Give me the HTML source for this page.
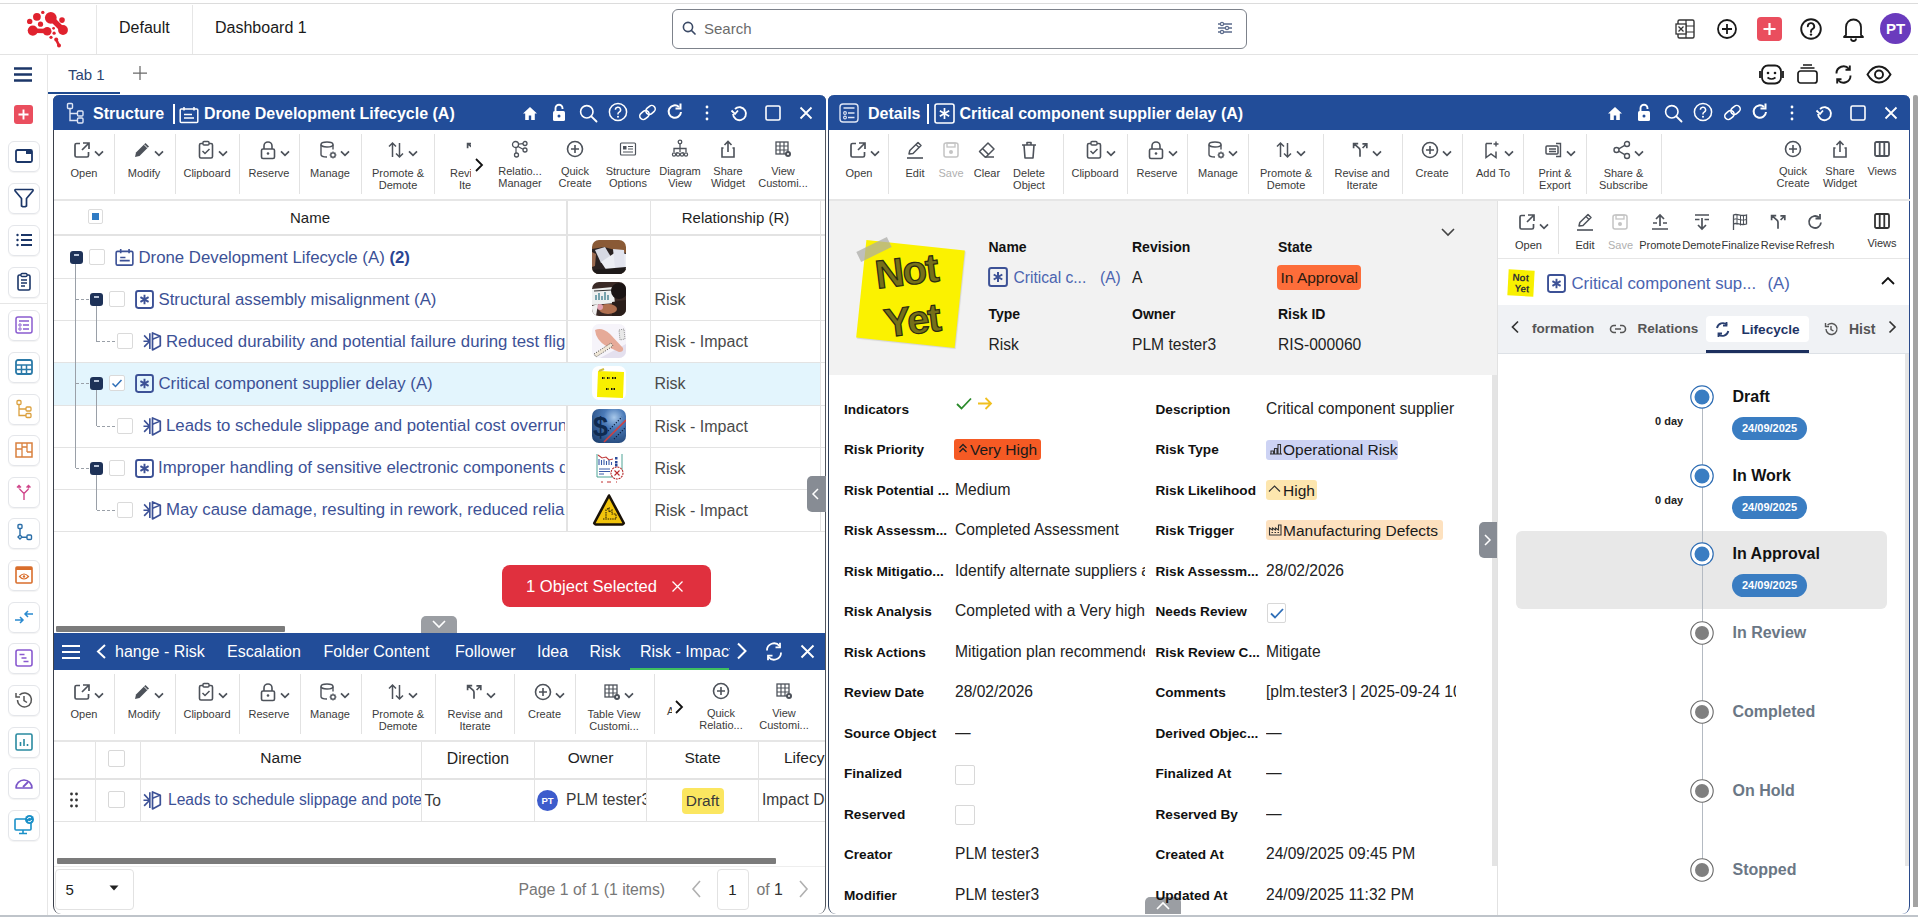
<!DOCTYPE html>
<html><head><meta charset="utf-8"><title>Dashboard</title>
<style>
html,body{margin:0;padding:0;background:#fff;}
body{width:1918px;height:917px;position:relative;overflow:hidden;font-family:"Liberation Sans",sans-serif;}
.t{position:absolute;white-space:nowrap;}
.r{position:absolute;}
</style></head><body>

<div class="r" style="left:0px;top:3px;width:1918px;height:1px;background:#dcdcdc"></div>
<div class="r" style="left:0px;top:54px;width:1918px;height:1px;background:#e3e3e3"></div>
<svg class="r" style="left:0px;top:0px;" width="80" height="54" viewBox="0 0 80 54" fill="none"><circle cx="50.8" cy="17.8" r="5.9" fill="#e0222e"/><circle cx="63" cy="30" r="4.9" fill="#e0222e"/><circle cx="32.8" cy="30.6" r="5.1" fill="#e0222e"/><circle cx="47.2" cy="31.2" r="4.3" fill="#e0222e"/><circle cx="36.9" cy="16.8" r="3.9" fill="#e0222e"/><circle cx="29.7" cy="21.4" r="2.7" fill="#e0222e"/><circle cx="40.5" cy="24.2" r="2.6" fill="#e0222e"/><circle cx="42.8" cy="12.4" r="1.7" fill="#e0222e"/><circle cx="62" cy="20.1" r="2.8" fill="#e0222e"/><circle cx="53.6" cy="28.3" r="1.4" fill="#e0222e"/><circle cx="54.1" cy="33.2" r="1.6" fill="#e0222e"/><circle cx="51" cy="37.3" r="1.6" fill="#e0222e"/><circle cx="56.2" cy="39.6" r="2.0" fill="#e0222e"/><circle cx="59" cy="45.5" r="2.0" fill="#e0222e"/><path d="M52 19 L62 29" stroke="#e0222e" stroke-width="5.5" stroke-linecap="round"/><path d="M33 30.8 L47 31" stroke="#e0222e" stroke-width="4.5"/><path d="M56.2 39.6 L59 45.5" stroke="#e0222e" stroke-width="2.6"/></svg>
<div class="r" style="left:96px;top:5px;width:1px;height:49px;background:#e6e6e6"></div>
<div class="r" style="left:192px;top:5px;width:1px;height:49px;background:#e6e6e6"></div>
<div class="t " style="left:119px;top:17.0px;font-size:16px;line-height:22px;color:#1a1a1a;font-weight:400;">Default</div>
<div class="t " style="left:215px;top:17.0px;font-size:16px;line-height:22px;color:#1a1a1a;font-weight:400;">Dashboard 1</div>
<div class="r" style="left:672px;top:9px;width:575px;height:40px;border:1px solid #7d828b;border-radius:6px;box-sizing:border-box;background:#fff"></div>
<svg class="r" style="left:682px;top:21px;" width="14" height="14" viewBox="0 0 14 14" fill="none"><circle cx="6" cy="6" r="4.6" stroke="#3b4a66" stroke-width="1.6"/><path d="M9.5 9.5 L13 13" stroke="#3b4a66" stroke-width="1.7" stroke-linecap="round"/></svg>
<div class="t " style="left:704px;top:18.0px;font-size:15px;line-height:21px;color:#6b6b6b;font-weight:400;">Search</div>
<svg class="r" style="left:1216px;top:20px;" width="18" height="16" viewBox="0 0 18 16" fill="none"><path d="M2 4h14M2 8h14M2 12h14" stroke="#5b6b8c" stroke-width="1.3"/><circle cx="6" cy="4" r="1.6" fill="#fff" stroke="#5b6b8c" stroke-width="1.2"/><circle cx="11" cy="8" r="1.6" fill="#fff" stroke="#5b6b8c" stroke-width="1.2"/><circle cx="6" cy="12" r="1.6" fill="#fff" stroke="#5b6b8c" stroke-width="1.2"/></svg>
<svg class="r" style="left:1675px;top:18px;" width="22" height="22" viewBox="0 0 22 22" fill="none"><rect x="3" y="2" width="16" height="18" rx="1.5" stroke="#333" stroke-width="1.4"/><path d="M11 2v18M11 8h8M11 14h8" stroke="#333" stroke-width="1.2"/><rect x="1" y="6" width="10" height="10" fill="#fff" stroke="#333" stroke-width="1.3"/><path d="M3.5 8.5l5 5M8.5 8.5l-5 5" stroke="#333" stroke-width="1.3"/></svg>
<svg class="r" style="left:1716px;top:18px;" width="22" height="22" viewBox="0 0 22 22" fill="none"><circle cx="11" cy="11" r="9" stroke="#1a1a1a" stroke-width="1.8"/><path d="M11 6v10M6 11h10" stroke="#1a1a1a" stroke-width="1.8"/></svg>
<div class="r" style="left:1757px;top:17px;width:25px;height:24px;background:#ea4e5e;border-radius:4px"></div>
<svg class="r" style="left:1757px;top:17px;" width="25" height="24" viewBox="0 0 25 24" fill="none"><path d="M12.5 6v12M6.5 12h12" stroke="#fff" stroke-width="2.2"/></svg>
<svg class="r" style="left:1799px;top:17px;" width="24" height="24" viewBox="0 0 24 24" fill="none"><circle cx="12" cy="12" r="9.8" stroke="#1a1a1a" stroke-width="1.9"/><path d="M8.8 9.3a3.2 3.2 0 1 1 4.6 2.9c-.9.5-1.4 1.1-1.4 2.1v.6" stroke="#1a1a1a" stroke-width="1.9" fill="none" stroke-linecap="round"/><circle cx="12" cy="17.6" r="1.2" fill="#1a1a1a"/></svg>
<svg class="r" style="left:1841px;top:16px;" width="25" height="26" viewBox="0 0 25 26" fill="none"><path d="M5 19V11a7.5 7.5 0 0 1 15 0v8l2 2H3z" stroke="#1a1a1a" stroke-width="1.8" stroke-linejoin="round"/><path d="M10 22.5a2.5 2.5 0 0 0 5 0" stroke="#1a1a1a" stroke-width="1.8"/></svg>
<div class="r" style="left:1880px;top:13px;width:31px;height:31px;background:#6a3bbd;border-radius:50%"></div>
<div class="t" style="left:1880.0px;width:31px;text-align:center;top:18.0px;font-size:15px;line-height:21px;color:#fff;font-weight:700;">PT</div>
<div class="r" style="left:47px;top:55px;width:1px;height:862px;background:#e6e6e6"></div>
<svg class="r" style="left:13px;top:66px;" width="20" height="17" viewBox="0 0 20 17" fill="none"><path d="M1 2.5h18M1 8.5h18M1 14.5h18" stroke="#1b3668" stroke-width="2.6"/></svg>
<div class="t " style="left:68px;top:64.0px;font-size:15px;line-height:21px;color:#2c4470;font-weight:400;">Tab 1</div>
<div class="r" style="left:48px;top:92px;width:72px;height:2px;background:#1f4a8f"></div>
<svg class="r" style="left:131px;top:64px;" width="18" height="18" viewBox="0 0 18 18" fill="none"><path d="M9 2v14M2 9h14" stroke="#6a6a6a" stroke-width="1.25"/></svg>
<svg class="r" style="left:1758px;top:63px;" width="27" height="23" viewBox="0 0 27 23" fill="none"><rect x="4" y="2.5" width="19" height="18" rx="6" stroke="#1a1a1a" stroke-width="1.8"/><path d="M2 8v7M25 8v7" stroke="#1a1a1a" stroke-width="1.8"/><circle cx="10" cy="10" r="1.3" fill="#1a1a1a"/><circle cx="17" cy="10" r="1.3" fill="#1a1a1a"/><path d="M9.5 14.5q4 3 8 0" stroke="#1a1a1a" stroke-width="1.6"/></svg>
<svg class="r" style="left:1796px;top:63px;" width="23" height="22" viewBox="0 0 23 22" fill="none"><rect x="2" y="8" width="19" height="12" rx="2.5" stroke="#1a1a1a" stroke-width="1.7"/><path d="M4.5 5h14M7 2h9" stroke="#1a1a1a" stroke-width="1.5"/></svg>
<svg class="r" style="left:1833px;top:64px;" width="21" height="21" viewBox="0 0 21 21" fill="none"><path d="M3.5 9.5a7 7 0 0 1 12.5-4.5M17.5 11.5a7 7 0 0 1-12.5 4.5" stroke="#1a1a1a" stroke-width="1.9"/><path d="M16.8 1.5v4.3h-4.3M4.2 19.5v-4.3h4.3" stroke="#1a1a1a" stroke-width="1.9"/></svg>
<svg class="r" style="left:1866px;top:65px;" width="26" height="19" viewBox="0 0 26 19" fill="none"><path d="M1.5 9.5C5 3.5 9 1.5 13 1.5s8 2 11.5 8c-3.5 6-7.5 8-11.5 8s-8-2-11.5-8z" stroke="#1a1a1a" stroke-width="1.9"/><circle cx="13" cy="9.5" r="4" stroke="#1a1a1a" stroke-width="1.9"/></svg>
<div class="r" style="left:14px;top:105px;width:19px;height:19px;background:#ea4e5e;border-radius:3px"></div>
<svg class="r" style="left:14px;top:105px;" width="19" height="19" viewBox="0 0 19 19" fill="none"><path d="M9.5 4.5v10M4.5 9.5h10" stroke="#fff" stroke-width="1.9"/></svg>
<div class="r" style="left:0px;top:303px;width:47px;height:1px;background:#e6e6e6"></div>
<div class="r" style="left:8px;top:141px;width:32px;height:31px;border:1px solid #e4e6ea;border-radius:6px;box-sizing:border-box;box-shadow:0 1px 1px rgba(0,0,0,0.05)"></div>
<svg class="r" style="left:13px;top:145px;" width="22" height="22" viewBox="0 0 22 22" fill="none"><rect x="3" y="5" width="16" height="12" rx="1.5" stroke="#1b3668" stroke-width="1.8"/><rect x="13" y="5" width="6" height="4" fill="#1b3668"/></svg>
<div class="r" style="left:8px;top:183px;width:32px;height:31px;border:1px solid #e4e6ea;border-radius:6px;box-sizing:border-box;box-shadow:0 1px 1px rgba(0,0,0,0.05)"></div>
<svg class="r" style="left:13px;top:187px;" width="22" height="22" viewBox="0 0 22 22" fill="none"><path d="M2.5 2.5h17q1 .3 .3 1.5L13.5 11.5V19q-2.5 1.5-5 0V11.5L2.2 4q-.7-1.2 .3-1.5z" stroke="#1b3668" stroke-width="1.7" stroke-linejoin="round"/></svg>
<div class="r" style="left:8px;top:225px;width:32px;height:31px;border:1px solid #e4e6ea;border-radius:6px;box-sizing:border-box;box-shadow:0 1px 1px rgba(0,0,0,0.05)"></div>
<svg class="r" style="left:13px;top:229px;" width="22" height="22" viewBox="0 0 22 22" fill="none"><circle cx="4.5" cy="6" r="1.2" fill="#1b3668"/><circle cx="4.5" cy="11" r="1.2" fill="#1b3668"/><circle cx="4.5" cy="16" r="1.2" fill="#1b3668"/><path d="M8 6h11M8 11h11M8 16h11" stroke="#1b3668" stroke-width="2"/></svg>
<div class="r" style="left:8px;top:267px;width:32px;height:31px;border:1px solid #e4e6ea;border-radius:6px;box-sizing:border-box;box-shadow:0 1px 1px rgba(0,0,0,0.05)"></div>
<svg class="r" style="left:13px;top:271px;" width="22" height="22" viewBox="0 0 22 22" fill="none"><rect x="5" y="4" width="12" height="15" rx="1.5" stroke="#1b3668" stroke-width="1.6"/><rect x="8" y="2.5" width="6" height="3" rx="1" stroke="#1b3668" stroke-width="1.3" fill="#fff"/><path d="M8 9h6M8 12h6M8 15h4" stroke="#1b3668" stroke-width="1.3"/></svg>
<div class="r" style="left:8px;top:310px;width:32px;height:31px;border:1px solid #e4e6ea;border-radius:6px;box-sizing:border-box;box-shadow:0 1px 1px rgba(0,0,0,0.05)"></div>
<svg class="r" style="left:13px;top:314px;" width="22" height="22" viewBox="0 0 22 22" fill="none"><rect x="3" y="3" width="16" height="16" rx="2" stroke="#8a5cd0" stroke-width="1.5"/><path d="M6 7h10M10 11h6M10 15h6" stroke="#8a5cd0" stroke-width="1.4"/><circle cx="7" cy="11" r="1.2" stroke="#8a5cd0" stroke-width="1"/><circle cx="7" cy="15" r="1.2" stroke="#8a5cd0" stroke-width="1"/></svg>
<div class="r" style="left:8px;top:352px;width:32px;height:31px;border:1px solid #e4e6ea;border-radius:6px;box-sizing:border-box;box-shadow:0 1px 1px rgba(0,0,0,0.05)"></div>
<svg class="r" style="left:13px;top:356px;" width="22" height="22" viewBox="0 0 22 22" fill="none"><rect x="3" y="4" width="16" height="14" rx="2" stroke="#2b7aa8" stroke-width="1.8"/><path d="M3 9h16M3 13.5h16M8.5 9v9M13.5 9v9" stroke="#2b7aa8" stroke-width="1.5"/></svg>
<div class="r" style="left:8px;top:394px;width:32px;height:31px;border:1px solid #e4e6ea;border-radius:6px;box-sizing:border-box;box-shadow:0 1px 1px rgba(0,0,0,0.05)"></div>
<svg class="r" style="left:13px;top:398px;" width="22" height="22" viewBox="0 0 22 22" fill="none"><rect x="4" y="2.5" width="4" height="4" rx="1" stroke="#dba03e" stroke-width="1.3"/><rect x="13" y="9" width="5" height="4" rx="1" stroke="#dba03e" stroke-width="1.3"/><rect x="13" y="15.5" width="5" height="4" rx="1" stroke="#dba03e" stroke-width="1.3"/><path d="M6 6.5v11h7M6 11h7" stroke="#dba03e" stroke-width="1.3"/></svg>
<div class="r" style="left:8px;top:435px;width:32px;height:31px;border:1px solid #e4e6ea;border-radius:6px;box-sizing:border-box;box-shadow:0 1px 1px rgba(0,0,0,0.05)"></div>
<svg class="r" style="left:13px;top:439px;" width="22" height="22" viewBox="0 0 22 22" fill="none"><rect x="3" y="4" width="16" height="14" stroke="#d9803e" stroke-width="1.5"/><path d="M9 4v14M14 4v9M3 10h6M14 13h5M9 8h5" stroke="#d9803e" stroke-width="1.3"/></svg>
<div class="r" style="left:8px;top:477px;width:32px;height:31px;border:1px solid #e4e6ea;border-radius:6px;box-sizing:border-box;box-shadow:0 1px 1px rgba(0,0,0,0.05)"></div>
<svg class="r" style="left:13px;top:481px;" width="22" height="22" viewBox="0 0 22 22" fill="none"><path d="M11 19v-6.5L6.5 8M11 12.5L15.5 8M4 6.5L6 4.5 8 6.5M6 4.5v3M13.5 6.5l2-2 2 2M15.5 4.5v3" stroke="#d0468a" stroke-width="1.4" stroke-dasharray="0"/></svg>
<div class="r" style="left:8px;top:518px;width:32px;height:31px;border:1px solid #e4e6ea;border-radius:6px;box-sizing:border-box;box-shadow:0 1px 1px rgba(0,0,0,0.05)"></div>
<svg class="r" style="left:13px;top:522px;" width="22" height="22" viewBox="0 0 22 22" fill="none"><rect x="5" y="2.5" width="4" height="4" rx="1" stroke="#2a6ea8" stroke-width="1.4"/><rect x="14" y="13" width="4.5" height="4.5" rx="1" stroke="#2a6ea8" stroke-width="1.4"/><path d="M7 6.5v6.5l-2 2 2 2 2-2-2-2M9 15.2h5" stroke="#2a6ea8" stroke-width="1.4"/></svg>
<div class="r" style="left:8px;top:560px;width:32px;height:31px;border:1px solid #e4e6ea;border-radius:6px;box-sizing:border-box;box-shadow:0 1px 1px rgba(0,0,0,0.05)"></div>
<svg class="r" style="left:13px;top:564px;" width="22" height="22" viewBox="0 0 22 22" fill="none"><rect x="3" y="3" width="16" height="16" rx="1" stroke="#d96e2c" stroke-width="1.6"/><rect x="3" y="3" width="16" height="3" fill="#d96e2c"/><path d="M6.5 12.5q4.5-5 9 0q-4.5 5-9 0z" stroke="#d96e2c" stroke-width="1.2"/><circle cx="11" cy="12.5" r="1.2" fill="#d96e2c"/></svg>
<div class="r" style="left:8px;top:602px;width:32px;height:31px;border:1px solid #e4e6ea;border-radius:6px;box-sizing:border-box;box-shadow:0 1px 1px rgba(0,0,0,0.05)"></div>
<svg class="r" style="left:13px;top:606px;" width="22" height="22" viewBox="0 0 22 22" fill="none"><path d="M2 14h8M7 11l3 3-3 3M20 8h-8M15 5l-3 3 3 3" stroke="#2a8ad0" stroke-width="1.5"/></svg>
<div class="r" style="left:8px;top:643px;width:32px;height:31px;border:1px solid #e4e6ea;border-radius:6px;box-sizing:border-box;box-shadow:0 1px 1px rgba(0,0,0,0.05)"></div>
<svg class="r" style="left:13px;top:647px;" width="22" height="22" viewBox="0 0 22 22" fill="none"><rect x="3" y="3" width="16" height="16" rx="2" stroke="#8a5ad0" stroke-width="1.6"/><path d="M6.5 7.5h5M8.5 11h5M10.5 14.5h5" stroke="#8a5ad0" stroke-width="1.4"/></svg>
<div class="r" style="left:8px;top:685px;width:32px;height:31px;border:1px solid #e4e6ea;border-radius:6px;box-sizing:border-box;box-shadow:0 1px 1px rgba(0,0,0,0.05)"></div>
<svg class="r" style="left:13px;top:689px;" width="22" height="22" viewBox="0 0 22 22" fill="none"><path d="M4.5 11a7 7 0 1 0 2-5" stroke="#555" stroke-width="1.5"/><path d="M3 4v4h4" stroke="#555" stroke-width="1.5"/><path d="M11 7v4.5l3 2" stroke="#555" stroke-width="1.5"/></svg>
<div class="r" style="left:8px;top:727px;width:32px;height:31px;border:1px solid #e4e6ea;border-radius:6px;box-sizing:border-box;box-shadow:0 1px 1px rgba(0,0,0,0.05)"></div>
<svg class="r" style="left:13px;top:731px;" width="22" height="22" viewBox="0 0 22 22" fill="none"><rect x="3" y="3" width="16" height="16" rx="1.5" stroke="#2a8aa0" stroke-width="1.6"/><path d="M7.5 15v-4M11 15v-7M14.5 15v-2" stroke="#2a8aa0" stroke-width="1.6"/></svg>
<div class="r" style="left:8px;top:768px;width:32px;height:31px;border:1px solid #e4e6ea;border-radius:6px;box-sizing:border-box;box-shadow:0 1px 1px rgba(0,0,0,0.05)"></div>
<svg class="r" style="left:13px;top:772px;" width="22" height="22" viewBox="0 0 22 22" fill="none"><path d="M3 16a8 8 0 0 1 16 0z" stroke="#7a56c8" stroke-width="1.6" stroke-linejoin="round"/><path d="M10 15l5-5" stroke="#7a56c8" stroke-width="1.8"/></svg>
<div class="r" style="left:8px;top:810px;width:32px;height:31px;border:1px solid #e4e6ea;border-radius:6px;box-sizing:border-box;box-shadow:0 1px 1px rgba(0,0,0,0.05)"></div>
<svg class="r" style="left:13px;top:814px;" width="22" height="22" viewBox="0 0 22 22" fill="none"><rect x="2" y="5" width="16" height="11" rx="1" stroke="#1a90c8" stroke-width="1.6"/><path d="M10 16v3M6 19.5h8" stroke="#1a90c8" stroke-width="1.6"/><circle cx="16.5" cy="5.5" r="4.5" fill="#1a90c8"/><path d="M14.5 5a2 2 0 0 1 3.5-1M18.5 6a2 2 0 0 1-3.5 1" stroke="#fff" stroke-width="1"/></svg>
<div class="r" style="left:53px;top:95px;width:773px;height:819px;border-left:1px solid #3a3f4a;border-right:1px solid #50555e;box-sizing:border-box;border-radius:6px 6px 8px 8px;background:#fff"></div>
<div class="r" style="left:53px;top:95px;width:773px;height:35px;background:#224d99;border-radius:6px 6px 0 0"></div>
<svg class="r" style="left:66px;top:102px;" width="19" height="23" viewBox="0 0 19 23" fill="none"><rect x="1.5" y="1.5" width="5" height="5" rx="1" stroke="#dfe6f5" stroke-width="1.4"/><rect x="11.5" y="9" width="5.5" height="5" rx="1" stroke="#dfe6f5" stroke-width="1.4"/><rect x="11.5" y="16" width="5.5" height="5" rx="1" stroke="#dfe6f5" stroke-width="1.4"/><path d="M4 6.5v12h7.5M4 11.5h7.5" stroke="#dfe6f5" stroke-width="1.4"/></svg>
<div class="t " style="left:93px;top:103.0px;font-size:16px;line-height:22px;color:#ffffff;font-weight:700;">Structure</div>
<div class="r" style="left:173px;top:104px;width:2px;height:20px;background:#fff"></div>
<svg class="r" style="left:179px;top:106px;" width="20" height="18" viewBox="0 0 20 18" fill="none"><rect x="1.2" y="3" width="17.6" height="13.6" rx="1" stroke="#fff" stroke-width="1.5"/><path d="M5 1v3.5M15 1v3.5M5 8.5h8M5 12h10" stroke="#fff" stroke-width="1.5"/></svg>
<div class="t " style="left:204px;top:103.0px;font-size:16px;line-height:22px;color:#ffffff;font-weight:700;">Drone Development Lifecycle (A)</div>
<svg class="r" style="left:521px;top:104px;" width="18" height="18" viewBox="0 0 18 18" fill="none"><path d="M2 9.5L9 3l7 6.5h-2.2V16h-3.6v-4.5H7.8V16H4.2V9.5z" fill="#fff"/></svg>
<svg class="r" style="left:551px;top:102px;" width="16" height="20" viewBox="0 0 16 20" fill="none"><path d="M4.5 9V6.2a3.5 3.5 0 0 1 7 0v.8" stroke="#fff" stroke-width="1.9" fill="none"/><rect x="2" y="9" width="12" height="10" rx="1.5" fill="#fff"/><circle cx="8" cy="14" r="1.5" fill="#224d99"/></svg>
<svg class="r" style="left:579px;top:104px;" width="19" height="19" viewBox="0 0 19 19" fill="none"><circle cx="7.8" cy="7.8" r="6.2" stroke="#fff" stroke-width="1.6"/><path d="M12.3 12.3L17.5 17.5" stroke="#fff" stroke-width="1.9" stroke-linecap="round"/></svg>
<svg class="r" style="left:608px;top:102px;" width="20" height="20" viewBox="0 0 20 20" fill="none"><circle cx="10" cy="10" r="8.6" stroke="#fff" stroke-width="1.5"/><path d="M7.4 7.8a2.6 2.6 0 1 1 3.8 2.3c-.8.4-1.2.9-1.2 1.7v.6" stroke="#fff" stroke-width="1.5" fill="none"/><circle cx="10" cy="14.8" r="1" fill="#fff"/></svg>
<svg class="r" style="left:637px;top:102px;" width="21" height="21" viewBox="0 0 21 21" fill="none"><g transform="rotate(-40 10.5 10.5)"><rect x="1.5" y="7" width="10" height="7" rx="3.5" stroke="#fff" stroke-width="1.6"/><rect x="9.5" y="7" width="10" height="7" rx="3.5" stroke="#fff" stroke-width="1.6"/></g></svg>
<svg class="r" style="left:666px;top:102px;" width="18" height="19" viewBox="0 0 18 19" fill="none"><path d="M15 10a6.2 6.2 0 1 1-2-5" stroke="#fff" stroke-width="2" fill="none"/><path d="M14.5 1.5v5h-5" stroke="#fff" stroke-width="2" fill="none"/></svg>
<svg class="r" style="left:704px;top:104px;" width="6" height="18" viewBox="0 0 6 18" fill="none"><circle cx="3" cy="3" r="1.4" fill="#fff"/><circle cx="3" cy="9" r="1.4" fill="#fff"/><circle cx="3" cy="15" r="1.4" fill="#fff"/></svg>
<svg class="r" style="left:730px;top:104px;" width="19" height="18" viewBox="0 0 19 18" fill="none"><path d="M3 10a6.5 6.5 0 1 0 2-5" stroke="#fff" stroke-width="1.8" fill="none"/><path d="M1.5 6.5l3.5 3.5 3-3.5" stroke="#fff" stroke-width="1.8" fill="none"/></svg>
<svg class="r" style="left:765px;top:105px;" width="16" height="16" viewBox="0 0 16 16" fill="none"><rect x="1" y="1" width="14" height="14" rx="1.5" stroke="#fff" stroke-width="1.6"/></svg>
<svg class="r" style="left:799px;top:106px;" width="14" height="14" viewBox="0 0 14 14" fill="none"><path d="M1.5 1.5l11 11M12.5 1.5l-11 11" stroke="#fff" stroke-width="1.8"/></svg>
<div class="r" style="left:54px;top:199px;width:771px;height:2px;background:#e6e6e6"></div>
<svg class="r" style="left:72px;top:140.0px;" width="20" height="20" viewBox="0 0 20 20" fill="none"><path d="M8 3.5H4.5a1.5 1.5 0 0 0-1.5 1.5v10.5A1.5 1.5 0 0 0 4.5 17H15a1.5 1.5 0 0 0 1.5-1.5V12" stroke="#4d525a" stroke-width="1.7"/><path d="M11 3h6v6M17 3l-7 7" stroke="#4d525a" stroke-width="1.7"/></svg>
<svg class="r" style="left:94px;top:149.5px;" width="10" height="7" viewBox="0 0 10 7" fill="none"><path d="M1 1.3l4 4 4-4" stroke="#4d525a" stroke-width="1.7"/></svg>
<div class="t" style="left:24.0px;width:120px;text-align:center;top:166.5px;font-size:11px;line-height:13px;color:#3b3b3b;font-weight:400;">Open</div>
<div class="r" style="left:114px;top:134px;width:1px;height:60px;background:#e2e2e2"></div>
<svg class="r" style="left:132px;top:140.0px;" width="20" height="20" viewBox="0 0 20 20" fill="none"><path d="M3 17l1-4.5L13.5 3l3.5 3.5L7.5 16z" fill="#4d525a"/><path d="M12 4.5l3.5 3.5" stroke="#fff" stroke-width="1"/></svg>
<svg class="r" style="left:154px;top:149.5px;" width="10" height="7" viewBox="0 0 10 7" fill="none"><path d="M1 1.3l4 4 4-4" stroke="#4d525a" stroke-width="1.7"/></svg>
<div class="t" style="left:84.0px;width:120px;text-align:center;top:166.5px;font-size:11px;line-height:13px;color:#3b3b3b;font-weight:400;">Modify</div>
<div class="r" style="left:175px;top:134px;width:1px;height:60px;background:#e2e2e2"></div>
<svg class="r" style="left:196px;top:140.0px;" width="20" height="20" viewBox="0 0 20 20" fill="none"><rect x="3.5" y="3.5" width="13" height="14.5" rx="1.5" stroke="#4d525a" stroke-width="1.6"/><rect x="7" y="1.5" width="6" height="3.5" rx="1" stroke="#4d525a" stroke-width="1.4" fill="#fff"/><path d="M6.5 11l2.5 2.5 4.5-4.5" stroke="#4d525a" stroke-width="1.5"/></svg>
<svg class="r" style="left:218px;top:149.5px;" width="10" height="7" viewBox="0 0 10 7" fill="none"><path d="M1 1.3l4 4 4-4" stroke="#4d525a" stroke-width="1.7"/></svg>
<div class="t" style="left:147.0px;width:120px;text-align:center;top:166.5px;font-size:11px;line-height:13px;color:#3b3b3b;font-weight:400;">Clipboard</div>
<div class="r" style="left:239px;top:134px;width:1px;height:60px;background:#e2e2e2"></div>
<svg class="r" style="left:258px;top:140.0px;" width="20" height="20" viewBox="0 0 20 20" fill="none"><path d="M6 9V6a4 4 0 0 1 8 0v3" stroke="#4d525a" stroke-width="1.6"/><rect x="3.5" y="9" width="13" height="9.5" rx="1.5" stroke="#4d525a" stroke-width="1.6"/><circle cx="10" cy="13.5" r="1.3" fill="#4d525a"/></svg>
<svg class="r" style="left:280px;top:149.5px;" width="10" height="7" viewBox="0 0 10 7" fill="none"><path d="M1 1.3l4 4 4-4" stroke="#4d525a" stroke-width="1.7"/></svg>
<div class="t" style="left:209.0px;width:120px;text-align:center;top:166.5px;font-size:11px;line-height:13px;color:#3b3b3b;font-weight:400;">Reserve</div>
<div class="r" style="left:299px;top:134px;width:1px;height:60px;background:#e2e2e2"></div>
<svg class="r" style="left:318px;top:140.0px;" width="20" height="20" viewBox="0 0 20 20" fill="none"><ellipse cx="9" cy="4.5" rx="6" ry="2.5" stroke="#4d525a" stroke-width="1.4"/><path d="M3 4.5v10c0 1.4 2.7 2.5 6 2.5M15 4.5v5" stroke="#4d525a" stroke-width="1.4"/><circle cx="15" cy="15" r="2.2" stroke="#4d525a" stroke-width="1.3"/><path d="M15 11.5v1.3M15 17.2v1.3M11.5 15h1.3M17.2 15h1.3M12.6 12.6l.9.9M16.5 16.5l.9.9M12.6 17.4l.9-.9M16.5 13.5l.9-.9" stroke="#4d525a" stroke-width="1.2"/></svg>
<svg class="r" style="left:340px;top:149.5px;" width="10" height="7" viewBox="0 0 10 7" fill="none"><path d="M1 1.3l4 4 4-4" stroke="#4d525a" stroke-width="1.7"/></svg>
<div class="t" style="left:270.0px;width:120px;text-align:center;top:166.5px;font-size:11px;line-height:13px;color:#3b3b3b;font-weight:400;">Manage</div>
<div class="r" style="left:361px;top:134px;width:1px;height:60px;background:#e2e2e2"></div>
<svg class="r" style="left:386px;top:140.0px;" width="20" height="20" viewBox="0 0 20 20" fill="none"><path d="M6.5 17V3M3 6.5l3.5-3.5 3.5 3.5M13.5 3v14M10 13.5l3.5 3.5 3.5-3.5" stroke="#4d525a" stroke-width="1.5"/></svg>
<svg class="r" style="left:408px;top:149.5px;" width="10" height="7" viewBox="0 0 10 7" fill="none"><path d="M1 1.3l4 4 4-4" stroke="#4d525a" stroke-width="1.7"/></svg>
<div class="t" style="left:338.0px;width:120px;text-align:center;top:166.5px;font-size:11px;line-height:13px;color:#3b3b3b;font-weight:400;">Promote &amp;</div>
<div class="t" style="left:338.0px;width:120px;text-align:center;top:178.5px;font-size:11px;line-height:13px;color:#3b3b3b;font-weight:400;">Demote</div>
<div class="r" style="left:434px;top:134px;width:1px;height:60px;background:#e2e2e2"></div>
<div class="r" style="left:440px;top:130px;width:31px;height:69px;overflow:hidden">
<svg class="r" style="left:24px;top:10px;" width="20" height="20" viewBox="0 0 20 20" fill="none"><path d="M10 16.8V10.5Q10 9.2 9 8.2L3.8 3.6M3.6 8.2V3.6H8.2M12.6 8L16.6 4M12.4 3.8H16.8V8.2" stroke="#4d525a" stroke-width="1.7"/></svg>
<div class="t" style="left:10px;top:36.5px;font-size:11px;line-height:13px;color:#3b3b3b">Revise and</div>
<div class="t" style="left:19px;top:48.5px;font-size:11px;line-height:13px;color:#3b3b3b">Iterate</div>
</div>
<svg class="r" style="left:473px;top:157px;" width="12" height="16" viewBox="0 0 12 16" fill="none"><path d="M3 2l6 6-6 6" stroke="#111" stroke-width="1.8"/></svg>
<svg class="r" style="left:510px;top:139.0px;" width="20" height="20" viewBox="0 0 20 20" fill="none"><circle cx="5.5" cy="5.5" r="3" stroke="#4d525a" stroke-width="1.3"/><circle cx="15" cy="4.5" r="2" stroke="#4d525a" stroke-width="1.3"/><circle cx="15" cy="11" r="2" stroke="#4d525a" stroke-width="1.3"/><circle cx="6.5" cy="16" r="2" stroke="#4d525a" stroke-width="1.3"/><path d="M8.5 5.2L13 4.6M8 7.5l5 2.8M6 8.5v5.5" stroke="#4d525a" stroke-width="1.2"/></svg>
<div class="t" style="left:460.0px;width:120px;text-align:center;top:165.0px;font-size:11px;line-height:13px;color:#3b3b3b;font-weight:400;">Relatio...</div>
<div class="t" style="left:460.0px;width:120px;text-align:center;top:177.0px;font-size:11px;line-height:13px;color:#3b3b3b;font-weight:400;">Manager</div>
<svg class="r" style="left:565px;top:139.0px;" width="20" height="20" viewBox="0 0 20 20" fill="none"><circle cx="10" cy="10" r="7.5" stroke="#4d525a" stroke-width="1.6"/><path d="M10 6v8M6 10h8" stroke="#4d525a" stroke-width="1.6"/></svg>
<div class="t" style="left:515.0px;width:120px;text-align:center;top:165.0px;font-size:11px;line-height:13px;color:#3b3b3b;font-weight:400;">Quick</div>
<div class="t" style="left:515.0px;width:120px;text-align:center;top:177.0px;font-size:11px;line-height:13px;color:#3b3b3b;font-weight:400;">Create</div>
<svg class="r" style="left:618px;top:139.0px;" width="20" height="20" viewBox="0 0 20 20" fill="none"><rect x="2.5" y="4" width="15" height="12" rx="1" stroke="#4d525a" stroke-width="1.2"/><rect x="5" y="7" width="3.5" height="3.5" fill="#4d525a"/><path d="M10 7.5h5M10 10h5M5 13h10" stroke="#4d525a" stroke-width="1.2"/></svg>
<div class="t" style="left:568.0px;width:120px;text-align:center;top:165.0px;font-size:11px;line-height:13px;color:#3b3b3b;font-weight:400;">Structure</div>
<div class="t" style="left:568.0px;width:120px;text-align:center;top:177.0px;font-size:11px;line-height:13px;color:#3b3b3b;font-weight:400;">Options</div>
<svg class="r" style="left:670px;top:139.0px;" width="20" height="20" viewBox="0 0 20 20" fill="none"><circle cx="10" cy="3" r="1.8" stroke="#4d525a" stroke-width="1.3"/><path d="M10 5v4M4 13V9.5h12V13M10 9.5V13M7 13v1M13 13v1" stroke="#4d525a" stroke-width="1.3"/><circle cx="4" cy="15.5" r="1.6" stroke="#4d525a" stroke-width="1.2"/><circle cx="8" cy="15.5" r="1.6" stroke="#4d525a" stroke-width="1.2"/><circle cx="12" cy="15.5" r="1.6" stroke="#4d525a" stroke-width="1.2"/><circle cx="16" cy="15.5" r="1.6" stroke="#4d525a" stroke-width="1.2"/></svg>
<div class="t" style="left:620.0px;width:120px;text-align:center;top:165.0px;font-size:11px;line-height:13px;color:#3b3b3b;font-weight:400;">Diagram</div>
<div class="t" style="left:620.0px;width:120px;text-align:center;top:177.0px;font-size:11px;line-height:13px;color:#3b3b3b;font-weight:400;">View</div>
<svg class="r" style="left:718px;top:139.0px;" width="20" height="20" viewBox="0 0 20 20" fill="none"><path d="M10 13V2.5M6.5 6l3.5-3.5L13.5 6" stroke="#4d525a" stroke-width="1.6"/><path d="M5.5 9H4v9h12V9h-1.5" stroke="#4d525a" stroke-width="1.6"/></svg>
<div class="t" style="left:668.0px;width:120px;text-align:center;top:165.0px;font-size:11px;line-height:13px;color:#3b3b3b;font-weight:400;">Share</div>
<div class="t" style="left:668.0px;width:120px;text-align:center;top:177.0px;font-size:11px;line-height:13px;color:#3b3b3b;font-weight:400;">Widget</div>
<svg class="r" style="left:773px;top:139.0px;" width="20" height="20" viewBox="0 0 20 20" fill="none"><rect x="3" y="3" width="12" height="12" stroke="#4d525a" stroke-width="1.3"/><path d="M3 7h12M3 11h12M7 3v12M11 3v12" stroke="#4d525a" stroke-width="1.2"/><circle cx="15" cy="15" r="3" fill="#4d525a"/><circle cx="15" cy="15" r="1" fill="#fff"/></svg>
<div class="t" style="left:723.0px;width:120px;text-align:center;top:165.0px;font-size:11px;line-height:13px;color:#3b3b3b;font-weight:400;">View</div>
<div class="t" style="left:723.0px;width:120px;text-align:center;top:177.0px;font-size:11px;line-height:13px;color:#3b3b3b;font-weight:400;">Customi...</div>
<div class="r" style="left:54px;top:234px;width:771px;height:2px;background:#e3e3e3"></div>
<div class="r" style="left:566px;top:201px;width:2px;height:330px;background:#e3e3e3"></div>
<div class="r" style="left:650px;top:201px;width:1px;height:330px;background:#e3e3e3"></div>
<div class="r" style="left:820px;top:201px;width:1px;height:330px;background:#e3e3e3"></div>
<div class="r" style="left:88px;top:209px;width:15px;height:15px;border:1px solid #dcdcdc;border-radius:2px;box-sizing:border-box;background:#fff"></div>
<div class="r" style="left:92px;top:213px;width:7px;height:7px;background:#2f7bc4"></div>
<div class="t" style="left:210.0px;width:200px;text-align:center;top:207.0px;font-size:15px;line-height:21px;color:#1e1e1e;font-weight:400;">Name</div>
<div class="t" style="left:635.5px;width:200px;text-align:center;top:207.0px;font-size:15px;line-height:21px;color:#1e1e1e;font-weight:400;">Relationship (R)</div>
<div class="r" style="left:54px;top:362px;width:766px;height:43px;background:#e3f5fd"></div>
<div class="r" style="left:54px;top:278px;width:771px;height:1px;background:#e3e3e3"></div>
<div class="r" style="left:54px;top:320px;width:771px;height:1px;background:#e3e3e3"></div>
<div class="r" style="left:54px;top:362px;width:771px;height:1px;background:#e3e3e3"></div>
<div class="r" style="left:54px;top:405px;width:771px;height:1px;background:#e3e3e3"></div>
<div class="r" style="left:54px;top:447px;width:771px;height:1px;background:#e3e3e3"></div>
<div class="r" style="left:54px;top:489px;width:771px;height:1px;background:#e3e3e3"></div>
<div class="r" style="left:54px;top:531px;width:771px;height:1px;background:#e3e3e3"></div>
<div class="r" style="left:75px;top:264px;width:1px;height:204px;background:#9aa0a8"></div>
<div class="r" style="left:76px;top:299px;width:14px;height:1px;background:repeating-linear-gradient(90deg,#9aa0a8 0 3px,transparent 3px 5px)"></div>
<div class="r" style="left:76px;top:383px;width:14px;height:1px;background:repeating-linear-gradient(90deg,#9aa0a8 0 3px,transparent 3px 5px)"></div>
<div class="r" style="left:76px;top:468px;width:14px;height:1px;background:repeating-linear-gradient(90deg,#9aa0a8 0 3px,transparent 3px 5px)"></div>
<div class="r" style="left:96px;top:306px;width:1px;height:36px;background:#9aa0a8"></div>
<div class="r" style="left:96px;top:390px;width:1px;height:36px;background:#9aa0a8"></div>
<div class="r" style="left:96px;top:475px;width:1px;height:35px;background:#9aa0a8"></div>
<div class="r" style="left:97px;top:341px;width:20px;height:1px;background:repeating-linear-gradient(90deg,#9aa0a8 0 3px,transparent 3px 5px)"></div>
<div class="r" style="left:97px;top:426px;width:20px;height:1px;background:repeating-linear-gradient(90deg,#9aa0a8 0 3px,transparent 3px 5px)"></div>
<div class="r" style="left:97px;top:510px;width:20px;height:1px;background:repeating-linear-gradient(90deg,#9aa0a8 0 3px,transparent 3px 5px)"></div>
<div class="r" style="left:70px;top:250.5px;width:13px;height:13px;background:#1e3258;border-radius:3px"></div>
<div class="r" style="left:74px;top:254px;width:5px;height:2px;background:#b8c4d8"></div>
<div class="r" style="left:89px;top:249px;width:16px;height:16px;border:1px solid #dadada;border-radius:2px;box-sizing:border-box;background:#fff"></div>
<svg class="r" style="left:115px;top:247.5px;" width="19" height="19" viewBox="0 0 20 20" fill="none"><rect x="1.2" y="3.5" width="17.6" height="14.5" rx="1.5" stroke="#3c5196" stroke-width="1.7"/><path d="M6 1v4.5M14.8 1v4.5M5.5 10h5.5M5 13.3h10.5" stroke="#3c5196" stroke-width="1.7"/></svg>
<div class="t " style="left:138.5px;top:246.0px;font-size:16.8px;line-height:23px;color:#3c5196;font-weight:400;">Drone Development Lifecycle (A) <b style="color:#2b4592">(2)</b></div>
<div class="r" style="left:90px;top:292.5px;width:13px;height:13px;background:#1e3258;border-radius:3px"></div>
<div class="r" style="left:94px;top:296px;width:5px;height:2px;background:#b8c4d8"></div>
<div class="r" style="left:109px;top:291px;width:16px;height:16px;border:1px solid #dadada;border-radius:2px;box-sizing:border-box;background:#fff"></div>
<svg class="r" style="left:134.5px;top:289.5px;" width="19" height="19" viewBox="0 0 20 20" fill="none"><rect x="1.1" y="1.1" width="17.8" height="17.8" rx="2.2" stroke="#3c5196" stroke-width="2"/><path d="M10 5v10M5.7 7.5l8.6 5M14.3 7.5l-8.6 5" stroke="#3c5196" stroke-width="2"/></svg>
<div class="t " style="left:158.5px;top:288.0px;font-size:16.8px;line-height:23px;color:#3c5196;font-weight:400;">Structural assembly misalignment (A)</div>
<div class="r" style="left:117px;top:333px;width:16px;height:16px;border:1px solid #dadada;border-radius:2px;box-sizing:border-box;background:#fff"></div>
<svg class="r" style="left:143px;top:331.5px;" width="19" height="19" viewBox="0 0 20 20" fill="none"><path d="M0.5 9.7H7M1.2 3.6L7 9.7M1.2 15.6L7 9.7M7.2 1.4V18" stroke="#3c5196" stroke-width="1.7"/><path d="M10 1L18.2 4.4V14.4L10 18.9Z" stroke="#3c5196" stroke-width="1.8" fill="none" stroke-linejoin="round"/><path d="M10 7.6L18.2 4.4" stroke="#3c5196" stroke-width="1.5"/></svg>
<div class="r" style="left:166px;top:328px;width:399px;height:28px;overflow:hidden">
<div class="t" style="left:0;top:0;font-size:16.8px;line-height:28px;color:#3c5196">Reduced durability and potential failure during test flights</div></div>
<div class="r" style="left:90px;top:376.5px;width:13px;height:13px;background:#1e3258;border-radius:3px"></div>
<div class="r" style="left:94px;top:380px;width:5px;height:2px;background:#b8c4d8"></div>
<div class="r" style="left:109px;top:375px;width:16px;height:16px;border:1px solid #dadada;border-radius:2px;box-sizing:border-box;background:#fff"></div>
<svg class="r" style="left:109px;top:375px;" width="16" height="16" viewBox="0 0 16 16" fill="none"><path d="M3.5 8.5l3 3 6-6.5" stroke="#2f6fb8" stroke-width="1.5"/></svg>
<svg class="r" style="left:134.5px;top:373.5px;" width="19" height="19" viewBox="0 0 20 20" fill="none"><rect x="1.1" y="1.1" width="17.8" height="17.8" rx="2.2" stroke="#3c5196" stroke-width="2"/><path d="M10 5v10M5.7 7.5l8.6 5M14.3 7.5l-8.6 5" stroke="#3c5196" stroke-width="2"/></svg>
<div class="t " style="left:158.5px;top:372.0px;font-size:16.8px;line-height:23px;color:#3c5196;font-weight:400;">Critical component supplier delay (A)</div>
<div class="r" style="left:117px;top:418px;width:16px;height:16px;border:1px solid #dadada;border-radius:2px;box-sizing:border-box;background:#fff"></div>
<svg class="r" style="left:143px;top:416.5px;" width="19" height="19" viewBox="0 0 20 20" fill="none"><path d="M0.5 9.7H7M1.2 3.6L7 9.7M1.2 15.6L7 9.7M7.2 1.4V18" stroke="#3c5196" stroke-width="1.7"/><path d="M10 1L18.2 4.4V14.4L10 18.9Z" stroke="#3c5196" stroke-width="1.8" fill="none" stroke-linejoin="round"/><path d="M10 7.6L18.2 4.4" stroke="#3c5196" stroke-width="1.5"/></svg>
<div class="r" style="left:166px;top:412px;width:399px;height:28px;overflow:hidden">
<div class="t" style="left:0;top:0;font-size:16.8px;line-height:28px;color:#3c5196">Leads to schedule slippage and potential cost overruns</div></div>
<div class="r" style="left:90px;top:461.5px;width:13px;height:13px;background:#1e3258;border-radius:3px"></div>
<div class="r" style="left:94px;top:465px;width:5px;height:2px;background:#b8c4d8"></div>
<div class="r" style="left:109px;top:460px;width:16px;height:16px;border:1px solid #dadada;border-radius:2px;box-sizing:border-box;background:#fff"></div>
<svg class="r" style="left:134.5px;top:458.5px;" width="19" height="19" viewBox="0 0 20 20" fill="none"><rect x="1.1" y="1.1" width="17.8" height="17.8" rx="2.2" stroke="#3c5196" stroke-width="2"/><path d="M10 5v10M5.7 7.5l8.6 5M14.3 7.5l-8.6 5" stroke="#3c5196" stroke-width="2"/></svg>
<div class="r" style="left:158px;top:454px;width:407px;height:28px;overflow:hidden">
<div class="t" style="left:0;top:0;font-size:16.8px;line-height:28px;color:#3c5196">Improper handling of sensitive electronic components during</div></div>
<div class="r" style="left:117px;top:502px;width:16px;height:16px;border:1px solid #dadada;border-radius:2px;box-sizing:border-box;background:#fff"></div>
<svg class="r" style="left:143px;top:500.5px;" width="19" height="19" viewBox="0 0 20 20" fill="none"><path d="M0.5 9.7H7M1.2 3.6L7 9.7M1.2 15.6L7 9.7M7.2 1.4V18" stroke="#3c5196" stroke-width="1.7"/><path d="M10 1L18.2 4.4V14.4L10 18.9Z" stroke="#3c5196" stroke-width="1.8" fill="none" stroke-linejoin="round"/><path d="M10 7.6L18.2 4.4" stroke="#3c5196" stroke-width="1.5"/></svg>
<div class="r" style="left:166px;top:496px;width:399px;height:28px;overflow:hidden">
<div class="t" style="left:0;top:0;font-size:16.8px;line-height:28px;color:#3c5196">May cause damage, resulting in rework, reduced reliability</div></div>
<div class="r" style="left:592px;top:240px;width:34px;height:34px;border-radius:7px;overflow:hidden"><svg class="r" style="left:0;top:0" width="34" height="34" viewBox="0 0 34 34" fill="none"><rect width="34" height="34" fill="#8a5a36"/><path d="M0 9L12 7L34 13V34H0Z" fill="#2a2222"/><path d="M3 10L13 7L19 17L9 23Z" fill="#d6d8e2"/><path d="M9 22L24 12L34 14V29L15 31Z" fill="#eceef4"/><path d="M21 9L32 10L33 28L23 28Z" fill="#e2e4ee"/><path d="M0 30L34 27V34H0Z" fill="#1e1a1a"/><path d="M0 12L4 14L3 26L0 27Z" fill="#9a6a50"/></svg></div>
<div class="r" style="left:592px;top:282px;width:34px;height:34px;border-radius:7px;overflow:hidden"><svg class="r" style="left:0;top:0" width="34" height="34" viewBox="0 0 34 34" fill="none"><rect width="34" height="34" fill="#3a2a26"/><path d="M0 7L21 5L23 21L0 23Z" fill="#eef0f0"/><path d="M4 18V13M7 18V11M10 18V14M13 18V10M16 18V13" stroke="#3a7a8a" stroke-width="1.3"/><path d="M2 9L20 8" stroke="#333" stroke-width="1"/><circle cx="27" cy="9" r="8" fill="#1a1414"/><path d="M20 20L34 18V34H20Z" fill="#2a1e1a"/><ellipse cx="16" cy="27" rx="9" ry="5" fill="#b07050"/><circle cx="8" cy="25" r="3" fill="#e0a0b0"/><path d="M0 24L6 22L4 34H0Z" fill="#f0f0f0"/></svg></div>
<div class="r" style="left:592px;top:324px;width:34px;height:34px;border-radius:7px;overflow:hidden"><svg class="r" style="left:0;top:0" width="34" height="34" viewBox="0 0 34 34" fill="none"><rect width="34" height="34" fill="#f6f4fa"/><path d="M8 34L34 20V34Z" fill="#e4e0ee"/><path d="M3 6Q10 3 18 10L31 24Q32 28 27 28L14 22Q4 16 3 6Z" fill="#e6aa98"/><path d="M2 30L19 19L21 22L4 33Z" fill="#efe6d6" stroke="#222" stroke-width="0.8" stroke-dasharray="1 1.5"/><path d="M27 6L32 5L33 15L28 16Z" fill="#e8e8e8" stroke="#555" stroke-width="0.6" stroke-dasharray="1 1"/></svg></div>
<div class="r" style="left:592px;top:366px;width:34px;height:34px;border-radius:7px;overflow:hidden"><svg class="r" style="left:0;top:0" width="34" height="34" viewBox="0 0 34 34" fill="none"><rect width="34" height="34" fill="#fff"/><path d="M6 5L32 6L31 32L5 31Z" fill="#f8f000"/><path d="M7 5L12 3" stroke="#cdbf40" stroke-width="2"/><path d="M10 12h3M15 12h3M20 12h4M14 23h3M19 23h5" stroke="#111" stroke-width="2.2" stroke-dasharray="1.5 1"/></svg></div>
<div class="r" style="left:592px;top:409px;width:34px;height:34px;border-radius:7px;overflow:hidden"><svg class="r" style="left:0;top:0" width="34" height="34" viewBox="0 0 34 34" fill="none"><defs><radialGradient id="g5" cx="0.65" cy="0.25" r="0.9"><stop offset="0" stop-color="#a8c8ea"/><stop offset="0.35" stop-color="#4a7ab8"/><stop offset="1" stop-color="#1e4070"/></radialGradient></defs><rect width="34" height="34" fill="url(#g5)"/><text x="1" y="27" font-family="Liberation Sans" font-weight="700" font-size="27" fill="#0f2a50">$</text><path d="M12 33L34 11" stroke="#d04040" stroke-width="1.6"/><path d="M16 22L30 8M22 30L34 18" stroke="#102040" stroke-width="1.2" stroke-dasharray="1.2 1.6"/></svg></div>
<div class="r" style="left:592px;top:451px;width:34px;height:34px;border-radius:7px;overflow:hidden"><svg class="r" style="left:0;top:0" width="34" height="34" viewBox="0 0 34 34" fill="none"><rect width="34" height="34" fill="#fff"/><path d="M5 3V26H27M30 3V24" stroke="#3a9a8a" stroke-width="0.9"/><path d="M6 4L10 7L14 6L17 9L21 8" stroke="#c03a3a" stroke-width="1.1"/><path d="M7 14V8M9.5 14V9M12 14V8.5M14.5 14V10M17 14V9M19.5 14V11" stroke="#3a5aa8" stroke-width="1.1"/><rect x="23" y="6" width="2.5" height="2.5" fill="#2a4a9a"/><rect x="23" y="10" width="2.5" height="2.5" fill="#2a4a9a"/><rect x="23" y="13" width="2.5" height="2.5" fill="#2a4a9a"/><path d="M7 18H18M7 20.5H18M7 23H12" stroke="#3a5aa8" stroke-width="1"/><circle cx="25" cy="22" r="6" fill="#fff" stroke="#b82a2a" stroke-width="1.1" stroke-dasharray="2 0.8"/><path d="M22.5 19.5L27.5 24.5M27.5 19.5L22.5 24.5" stroke="#b82a2a" stroke-width="1.1"/><path d="M9 31h2M15 31h4M24 31h1" stroke="#c03030" stroke-width="1"/></svg></div>
<div class="r" style="left:592px;top:493px;width:34px;height:34px;border-radius:7px;overflow:hidden"><svg class="r" style="left:0;top:0" width="34" height="34" viewBox="0 0 34 34" fill="none"><rect width="34" height="34" fill="#fff"/><path d="M17 2.5L32.5 31.5H1.5Z" fill="#f2c40c" stroke="#1a1208" stroke-width="2.6" stroke-linejoin="round"/><path d="M11 26H24V21H20V17L17 19V15L14 17V26" stroke="#2a2208" stroke-width="1.1" stroke-dasharray="1.5 0.8"/></svg></div>
<div class="t " style="left:654.5px;top:288.5px;font-size:16px;line-height:22px;color:#4a4a4a;font-weight:400;">Risk</div>
<div class="t " style="left:654.5px;top:330.5px;font-size:16px;line-height:22px;color:#4a4a4a;font-weight:400;">Risk - Impact</div>
<div class="t " style="left:654.5px;top:372.5px;font-size:16px;line-height:22px;color:#4a4a4a;font-weight:400;">Risk</div>
<div class="t " style="left:654.5px;top:415.5px;font-size:16px;line-height:22px;color:#4a4a4a;font-weight:400;">Risk - Impact</div>
<div class="t " style="left:654.5px;top:457.5px;font-size:16px;line-height:22px;color:#4a4a4a;font-weight:400;">Risk</div>
<div class="t " style="left:654.5px;top:499.5px;font-size:16px;line-height:22px;color:#4a4a4a;font-weight:400;">Risk - Impact</div>
<div class="r" style="left:807px;top:476px;width:19px;height:36px;background:#878c94;border-radius:5px 0 0 5px"></div>
<svg class="r" style="left:810px;top:486px;" width="12" height="16" viewBox="0 0 12 16" fill="none"><path d="M8 3l-5 5 5 5" stroke="#fff" stroke-width="1.5"/></svg>
<div class="r" style="left:502px;top:565px;width:209px;height:42px;background:#e0303e;border-radius:8px"></div>
<div class="t " style="left:526px;top:574.5px;font-size:16.6px;line-height:23px;color:#fff;font-weight:400;">1 Object Selected</div>
<svg class="r" style="left:671px;top:580px;" width="13" height="13" viewBox="0 0 13 13" fill="none"><path d="M1.5 1.5l10 10M11.5 1.5l-10 10" stroke="#fff" stroke-width="1.3"/></svg>
<div class="r" style="left:56px;top:626px;width:229px;height:6px;background:#7b7b7b;border-radius:1px"></div>
<div class="r" style="left:421px;top:616px;width:36px;height:17px;background:#9b9ea3;border-radius:5px 5px 0 0"></div>
<svg class="r" style="left:431px;top:618px;" width="16" height="12" viewBox="0 0 16 12" fill="none"><path d="M2 3l6 6 6-6" stroke="#fff" stroke-width="1.6"/></svg>
<div class="r" style="left:54px;top:633px;width:771px;height:37px;background:#224d99"></div>
<svg class="r" style="left:61px;top:644px;" width="20" height="16" viewBox="0 0 20 16" fill="none"><path d="M1 2h18M1 8h18M1 14h18" stroke="#fff" stroke-width="2"/></svg>
<svg class="r" style="left:95px;top:643px;" width="13" height="17" viewBox="0 0 13 17" fill="none"><path d="M10 2L3 8.5 10 15" stroke="#fff" stroke-width="2"/></svg>
<div class="r" style="left:115px;top:638px;width:615px;height:28px;overflow:hidden">
<div class="t" style="left:0px;top:0;font-size:16px;line-height:27px;color:#fff">hange - Risk</div>
<div class="t" style="left:112px;top:0;font-size:16px;line-height:27px;color:#fff">Escalation</div>
<div class="t" style="left:208.5px;top:0;font-size:16px;line-height:27px;color:#fff">Folder Content</div>
<div class="t" style="left:340px;top:0;font-size:16px;line-height:27px;color:#fff">Follower</div>
<div class="t" style="left:422px;top:0;font-size:16px;line-height:27px;color:#fff">Idea</div>
<div class="t" style="left:474.5px;top:0;font-size:16px;line-height:27px;color:#fff">Risk</div>
<div class="t" style="left:525px;top:0;font-size:16px;line-height:27px;color:#fff">Risk - Impact</div>
</div>
<div class="r" style="left:630px;top:668px;width:99px;height:2px;background:#3fbf5f"></div>
<svg class="r" style="left:735px;top:641px;" width="14" height="20" viewBox="0 0 14 20" fill="none"><path d="M3 2.5l7.5 7.5L3 17.5" stroke="#fff" stroke-width="2"/></svg>
<svg class="r" style="left:764px;top:642px;" width="20" height="19" viewBox="0 0 20 19" fill="none"><path d="M3 8.5a7 7 0 0 1 12.5-4.5M17 10.5a7 7 0 0 1-12.5 4.5" stroke="#fff" stroke-width="1.8"/><path d="M16 0.8v4.5h-4.5M4 18.2v-4.5h4.5" stroke="#fff" stroke-width="1.8"/></svg>
<svg class="r" style="left:800px;top:644px;" width="15" height="15" viewBox="0 0 15 15" fill="none"><path d="M1.5 1.5l12 12M13.5 1.5l-12 12" stroke="#fff" stroke-width="1.9"/></svg>
<div class="r" style="left:54px;top:740px;width:771px;height:2px;background:#e6e6e6"></div>
<svg class="r" style="left:72px;top:682.0px;" width="20" height="20" viewBox="0 0 20 20" fill="none"><path d="M8 3.5H4.5a1.5 1.5 0 0 0-1.5 1.5v10.5A1.5 1.5 0 0 0 4.5 17H15a1.5 1.5 0 0 0 1.5-1.5V12" stroke="#4d525a" stroke-width="1.7"/><path d="M11 3h6v6M17 3l-7 7" stroke="#4d525a" stroke-width="1.7"/></svg>
<svg class="r" style="left:94px;top:691.5px;" width="10" height="7" viewBox="0 0 10 7" fill="none"><path d="M1 1.3l4 4 4-4" stroke="#4d525a" stroke-width="1.7"/></svg>
<div class="t" style="left:24.0px;width:120px;text-align:center;top:708.0px;font-size:11px;line-height:13px;color:#3b3b3b;font-weight:400;">Open</div>
<div class="r" style="left:114px;top:674px;width:1px;height:60px;background:#e2e2e2"></div>
<svg class="r" style="left:132px;top:682.0px;" width="20" height="20" viewBox="0 0 20 20" fill="none"><path d="M3 17l1-4.5L13.5 3l3.5 3.5L7.5 16z" fill="#4d525a"/><path d="M12 4.5l3.5 3.5" stroke="#fff" stroke-width="1"/></svg>
<svg class="r" style="left:154px;top:691.5px;" width="10" height="7" viewBox="0 0 10 7" fill="none"><path d="M1 1.3l4 4 4-4" stroke="#4d525a" stroke-width="1.7"/></svg>
<div class="t" style="left:84.0px;width:120px;text-align:center;top:708.0px;font-size:11px;line-height:13px;color:#3b3b3b;font-weight:400;">Modify</div>
<div class="r" style="left:175px;top:674px;width:1px;height:60px;background:#e2e2e2"></div>
<svg class="r" style="left:196px;top:682.0px;" width="20" height="20" viewBox="0 0 20 20" fill="none"><rect x="3.5" y="3.5" width="13" height="14.5" rx="1.5" stroke="#4d525a" stroke-width="1.6"/><rect x="7" y="1.5" width="6" height="3.5" rx="1" stroke="#4d525a" stroke-width="1.4" fill="#fff"/><path d="M6.5 11l2.5 2.5 4.5-4.5" stroke="#4d525a" stroke-width="1.5"/></svg>
<svg class="r" style="left:218px;top:691.5px;" width="10" height="7" viewBox="0 0 10 7" fill="none"><path d="M1 1.3l4 4 4-4" stroke="#4d525a" stroke-width="1.7"/></svg>
<div class="t" style="left:147.0px;width:120px;text-align:center;top:708.0px;font-size:11px;line-height:13px;color:#3b3b3b;font-weight:400;">Clipboard</div>
<div class="r" style="left:239px;top:674px;width:1px;height:60px;background:#e2e2e2"></div>
<svg class="r" style="left:258px;top:682.0px;" width="20" height="20" viewBox="0 0 20 20" fill="none"><path d="M6 9V6a4 4 0 0 1 8 0v3" stroke="#4d525a" stroke-width="1.6"/><rect x="3.5" y="9" width="13" height="9.5" rx="1.5" stroke="#4d525a" stroke-width="1.6"/><circle cx="10" cy="13.5" r="1.3" fill="#4d525a"/></svg>
<svg class="r" style="left:280px;top:691.5px;" width="10" height="7" viewBox="0 0 10 7" fill="none"><path d="M1 1.3l4 4 4-4" stroke="#4d525a" stroke-width="1.7"/></svg>
<div class="t" style="left:209.0px;width:120px;text-align:center;top:708.0px;font-size:11px;line-height:13px;color:#3b3b3b;font-weight:400;">Reserve</div>
<div class="r" style="left:300px;top:674px;width:1px;height:60px;background:#e2e2e2"></div>
<svg class="r" style="left:318px;top:682.0px;" width="20" height="20" viewBox="0 0 20 20" fill="none"><ellipse cx="9" cy="4.5" rx="6" ry="2.5" stroke="#4d525a" stroke-width="1.4"/><path d="M3 4.5v10c0 1.4 2.7 2.5 6 2.5M15 4.5v5" stroke="#4d525a" stroke-width="1.4"/><circle cx="15" cy="15" r="2.2" stroke="#4d525a" stroke-width="1.3"/><path d="M15 11.5v1.3M15 17.2v1.3M11.5 15h1.3M17.2 15h1.3M12.6 12.6l.9.9M16.5 16.5l.9.9M12.6 17.4l.9-.9M16.5 13.5l.9-.9" stroke="#4d525a" stroke-width="1.2"/></svg>
<svg class="r" style="left:340px;top:691.5px;" width="10" height="7" viewBox="0 0 10 7" fill="none"><path d="M1 1.3l4 4 4-4" stroke="#4d525a" stroke-width="1.7"/></svg>
<div class="t" style="left:270.0px;width:120px;text-align:center;top:708.0px;font-size:11px;line-height:13px;color:#3b3b3b;font-weight:400;">Manage</div>
<div class="r" style="left:361px;top:674px;width:1px;height:60px;background:#e2e2e2"></div>
<svg class="r" style="left:386px;top:682.0px;" width="20" height="20" viewBox="0 0 20 20" fill="none"><path d="M6.5 17V3M3 6.5l3.5-3.5 3.5 3.5M13.5 3v14M10 13.5l3.5 3.5 3.5-3.5" stroke="#4d525a" stroke-width="1.5"/></svg>
<svg class="r" style="left:408px;top:691.5px;" width="10" height="7" viewBox="0 0 10 7" fill="none"><path d="M1 1.3l4 4 4-4" stroke="#4d525a" stroke-width="1.7"/></svg>
<div class="t" style="left:338.0px;width:120px;text-align:center;top:708.0px;font-size:11px;line-height:13px;color:#3b3b3b;font-weight:400;">Promote &amp;</div>
<div class="t" style="left:338.0px;width:120px;text-align:center;top:720.0px;font-size:11px;line-height:13px;color:#3b3b3b;font-weight:400;">Demote</div>
<div class="r" style="left:435px;top:674px;width:1px;height:60px;background:#e2e2e2"></div>
<svg class="r" style="left:464px;top:682.0px;" width="20" height="20" viewBox="0 0 20 20" fill="none"><path d="M10 16.8V10.5Q10 9.2 9 8.2L3.8 3.6M3.6 8.2V3.6H8.2M12.6 8L16.6 4M12.4 3.8H16.8V8.2" stroke="#4d525a" stroke-width="1.7"/></svg>
<svg class="r" style="left:486px;top:691.5px;" width="10" height="7" viewBox="0 0 10 7" fill="none"><path d="M1 1.3l4 4 4-4" stroke="#4d525a" stroke-width="1.7"/></svg>
<div class="t" style="left:415.0px;width:120px;text-align:center;top:708.0px;font-size:11px;line-height:13px;color:#3b3b3b;font-weight:400;">Revise and</div>
<div class="t" style="left:415.0px;width:120px;text-align:center;top:720.0px;font-size:11px;line-height:13px;color:#3b3b3b;font-weight:400;">Iterate</div>
<div class="r" style="left:514px;top:674px;width:1px;height:60px;background:#e2e2e2"></div>
<svg class="r" style="left:533px;top:682.0px;" width="20" height="20" viewBox="0 0 20 20" fill="none"><circle cx="10" cy="10" r="7.5" stroke="#4d525a" stroke-width="1.6"/><path d="M10 6v8M6 10h8" stroke="#4d525a" stroke-width="1.6"/></svg>
<svg class="r" style="left:555px;top:691.5px;" width="10" height="7" viewBox="0 0 10 7" fill="none"><path d="M1 1.3l4 4 4-4" stroke="#4d525a" stroke-width="1.7"/></svg>
<div class="t" style="left:484.5px;width:120px;text-align:center;top:708.0px;font-size:11px;line-height:13px;color:#3b3b3b;font-weight:400;">Create</div>
<div class="r" style="left:575px;top:674px;width:1px;height:60px;background:#e2e2e2"></div>
<svg class="r" style="left:602px;top:682.0px;" width="20" height="20" viewBox="0 0 20 20" fill="none"><rect x="3" y="3" width="12" height="12" stroke="#4d525a" stroke-width="1.3"/><path d="M3 7h12M3 11h12M7 3v12M11 3v12" stroke="#4d525a" stroke-width="1.2"/><circle cx="15" cy="15" r="3" fill="#4d525a"/><circle cx="15" cy="15" r="1" fill="#fff"/></svg>
<svg class="r" style="left:624px;top:691.5px;" width="10" height="7" viewBox="0 0 10 7" fill="none"><path d="M1 1.3l4 4 4-4" stroke="#4d525a" stroke-width="1.7"/></svg>
<div class="t" style="left:554.0px;width:120px;text-align:center;top:708.0px;font-size:11px;line-height:13px;color:#3b3b3b;font-weight:400;">Table View</div>
<div class="t" style="left:554.0px;width:120px;text-align:center;top:720.0px;font-size:11px;line-height:13px;color:#3b3b3b;font-weight:400;">Customi...</div>
<div class="r" style="left:654px;top:674px;width:1px;height:60px;background:#e2e2e2"></div>
<div class="r" style="left:664px;top:700px;width:8px;height:20px;overflow:hidden"><div class="t" style="left:3px;top:5px;font-size:11px;line-height:13px;color:#3b3b3b">A</div></div>
<svg class="r" style="left:673px;top:699px;" width="12" height="16" viewBox="0 0 12 16" fill="none"><path d="M3 2l6 6-6 6" stroke="#111" stroke-width="1.8"/></svg>
<svg class="r" style="left:711px;top:681.0px;" width="20" height="20" viewBox="0 0 20 20" fill="none"><circle cx="10" cy="10" r="7.5" stroke="#4d525a" stroke-width="1.6"/><path d="M10 6v8M6 10h8" stroke="#4d525a" stroke-width="1.6"/></svg>
<div class="t" style="left:661.0px;width:120px;text-align:center;top:707.0px;font-size:11px;line-height:13px;color:#3b3b3b;font-weight:400;">Quick</div>
<div class="t" style="left:661.0px;width:120px;text-align:center;top:719.0px;font-size:11px;line-height:13px;color:#3b3b3b;font-weight:400;">Relatio...</div>
<svg class="r" style="left:774px;top:681.0px;" width="20" height="20" viewBox="0 0 20 20" fill="none"><rect x="3" y="3" width="12" height="12" stroke="#4d525a" stroke-width="1.3"/><path d="M3 7h12M3 11h12M7 3v12M11 3v12" stroke="#4d525a" stroke-width="1.2"/><circle cx="15" cy="15" r="3" fill="#4d525a"/><circle cx="15" cy="15" r="1" fill="#fff"/></svg>
<div class="t" style="left:724.0px;width:120px;text-align:center;top:707.0px;font-size:11px;line-height:13px;color:#3b3b3b;font-weight:400;">View</div>
<div class="t" style="left:724.0px;width:120px;text-align:center;top:719.0px;font-size:11px;line-height:13px;color:#3b3b3b;font-weight:400;">Customi...</div>
<div class="r" style="left:54px;top:778px;width:771px;height:2px;background:#e3e3e3"></div>
<div class="r" style="left:54px;top:821px;width:771px;height:1px;background:#e3e3e3"></div>
<div class="r" style="left:95px;top:742px;width:1px;height:80px;background:#e3e3e3"></div>
<div class="r" style="left:140px;top:742px;width:1px;height:80px;background:#e3e3e3"></div>
<div class="r" style="left:421px;top:742px;width:1px;height:80px;background:#e3e3e3"></div>
<div class="r" style="left:534px;top:742px;width:1px;height:80px;background:#e3e3e3"></div>
<div class="r" style="left:646px;top:742px;width:1px;height:80px;background:#e3e3e3"></div>
<div class="r" style="left:758px;top:742px;width:1px;height:80px;background:#e3e3e3"></div>
<div class="r" style="left:108px;top:750px;width:17px;height:17px;border:1px solid #d8d8d8;border-radius:2px;box-sizing:border-box;background:#fff"></div>
<div class="t" style="left:181.0px;width:200px;text-align:center;top:747.0px;font-size:15.5px;line-height:21px;color:#1e1e1e;font-weight:400;">Name</div>
<div class="t" style="left:378.0px;width:200px;text-align:center;top:747.5px;font-size:15.8px;line-height:21px;color:#1e1e1e;font-weight:400;">Direction</div>
<div class="t" style="left:490.5px;width:200px;text-align:center;top:747.0px;font-size:15.5px;line-height:21px;color:#1e1e1e;font-weight:400;">Owner</div>
<div class="t" style="left:602.5px;width:200px;text-align:center;top:747.0px;font-size:15.5px;line-height:21px;color:#1e1e1e;font-weight:400;">State</div>
<div class="r" style="left:759px;top:743.5px;width:66px;height:28px;overflow:hidden"><div class="t" style="left:25px;top:0;font-size:15.5px;line-height:28px;color:#1e1e1e">Lifecycle</div></div>
<svg class="r" style="left:69px;top:791px;" width="10" height="18" viewBox="0 0 10 18" fill="none"><circle cx="2.5" cy="3" r="1.4" fill="#333"/><circle cx="7.5" cy="3" r="1.4" fill="#333"/><circle cx="2.5" cy="9" r="1.4" fill="#333"/><circle cx="7.5" cy="9" r="1.4" fill="#333"/><circle cx="2.5" cy="15" r="1.4" fill="#333"/><circle cx="7.5" cy="15" r="1.4" fill="#333"/></svg>
<div class="r" style="left:108px;top:791px;width:17px;height:17px;border:1px solid #d8d8d8;border-radius:2px;box-sizing:border-box;background:#fff"></div>
<svg class="r" style="left:143px;top:790.5px;" width="19" height="19" viewBox="0 0 20 20" fill="none"><path d="M0.5 9.7H7M1.2 3.6L7 9.7M1.2 15.6L7 9.7M7.2 1.4V18" stroke="#3c5196" stroke-width="1.7"/><path d="M10 1L18.2 4.4V14.4L10 18.9Z" stroke="#3c5196" stroke-width="1.8" fill="none" stroke-linejoin="round"/><path d="M10 7.6L18.2 4.4" stroke="#3c5196" stroke-width="1.5"/></svg>
<div class="r" style="left:168px;top:786px;width:253px;height:28px;overflow:hidden">
<div class="t" style="left:0;top:0;font-size:15.6px;line-height:28px;color:#3c5196">Leads to schedule slippage and potential cost overruns</div></div>
<div class="t " style="left:424.5px;top:789.5px;font-size:15.6px;line-height:21px;color:#3a3a3a;font-weight:400;">To</div>
<div class="r" style="left:537px;top:790px;width:21px;height:21px;background:#3d5ccc;border-radius:50%"></div>
<div class="t" style="left:537.0px;width:21px;text-align:center;top:794.0px;font-size:9.5px;line-height:13px;color:#fff;font-weight:700;">PT</div>
<div class="r" style="left:566px;top:786px;width:80px;height:28px;overflow:hidden"><div class="t" style="left:0;top:0;font-size:15.6px;line-height:28px;color:#3a3a3a">PLM tester3</div></div>
<div class="r" style="left:681.5px;top:788px;width:42px;height:26px;background:#fbe660;border-radius:4px"></div>
<div class="t" style="left:672.5px;width:60px;text-align:center;top:789.5px;font-size:15.5px;line-height:21px;color:#3a3a3a;font-weight:400;">Draft</div>
<div class="r" style="left:761px;top:786px;width:64px;height:28px;overflow:hidden"><div class="t" style="left:1px;top:0;font-size:15.6px;line-height:28px;color:#3a3a3a">Impact Details</div></div>
<div class="r" style="left:57px;top:858px;width:719px;height:6px;background:#7b7b7b;border-radius:1px"></div>
<div class="r" style="left:54px;top:866px;width:771px;height:1px;background:#eeeeee"></div>
<div class="r" style="left:55px;top:869px;width:79px;height:41px;border:1px solid #e2e2e2;border-radius:4px;box-sizing:border-box;background:#fff"></div>
<div class="t " style="left:65.5px;top:879.0px;font-size:15px;line-height:21px;color:#222;font-weight:400;">5</div>
<svg class="r" style="left:109px;top:885px;" width="10" height="6" viewBox="0 0 10 6" fill="none"><path d="M0.5 0.5h9l-4.5 5z" fill="#222"/></svg>
<div class="t " style="left:518.5px;top:878.5px;font-size:15.8px;line-height:22px;color:#777;font-weight:400;">Page 1 of 1 (1 items)</div>
<svg class="r" style="left:690px;top:879px;" width="12" height="20" viewBox="0 0 12 20" fill="none"><path d="M10 2L3 10l7 8" stroke="#b0b0b0" stroke-width="1.6"/></svg>
<div class="r" style="left:717px;top:869px;width:32px;height:41px;border:1px solid #e2e2e2;border-radius:4px;box-sizing:border-box;background:#fff"></div>
<div class="t" style="left:717.5px;width:30px;text-align:center;top:879.0px;font-size:15px;line-height:21px;color:#222;font-weight:400;">1</div>
<div class="t " style="left:756.5px;top:878.5px;font-size:15.8px;line-height:22px;color:#777;font-weight:400;">of <span style="color:#333">1</span></div>
<svg class="r" style="left:798px;top:879px;" width="12" height="20" viewBox="0 0 12 20" fill="none"><path d="M2 2l7 8-7 8" stroke="#b0b0b0" stroke-width="1.6"/></svg>
<div class="r" style="left:828px;top:95px;width:1082px;height:819px;border-left:1px solid #2f3f5a;border-right:1px solid #2a4a8a;box-sizing:border-box;border-radius:6px 6px 8px 8px;background:#fff"></div>
<div class="r" style="left:828px;top:95px;width:1082px;height:35px;background:#224d99;border-radius:6px 6px 0 0"></div>
<svg class="r" style="left:839px;top:103px;" width="20" height="20" viewBox="0 0 20 20" fill="none"><rect x="1" y="1" width="18" height="18" rx="3" stroke="#dfe6f5" stroke-width="1.4"/><path d="M4.5 5h11M9 10h6.5M9 14.5h6.5" stroke="#dfe6f5" stroke-width="1.6"/><circle cx="6" cy="10" r="1.4" stroke="#dfe6f5" stroke-width="1.1"/><circle cx="6" cy="14.5" r="1.4" stroke="#dfe6f5" stroke-width="1.1"/></svg>
<div class="t " style="left:868px;top:103.0px;font-size:16px;line-height:22px;color:#fff;font-weight:700;">Details</div>
<div class="r" style="left:927px;top:104px;width:2px;height:20px;background:#fff"></div>
<svg class="r" style="left:934px;top:103px;" width="21" height="21" viewBox="0 0 21 21" fill="none"><rect x="1" y="1" width="19" height="19" rx="2" stroke="#fff" stroke-width="1.6"/><path d="M10.5 5v11M5.8 7.8l9.4 5.4M15.2 7.8l-9.4 5.4" stroke="#fff" stroke-width="1.7"/></svg>
<div class="t " style="left:959.5px;top:103.0px;font-size:16px;line-height:22px;color:#fff;font-weight:700;">Critical component supplier delay (A)</div>
<svg class="r" style="left:1606px;top:104px;" width="18" height="18" viewBox="0 0 18 18" fill="none"><path d="M2 9.5L9 3l7 6.5h-2.2V16h-3.6v-4.5H7.8V16H4.2V9.5z" fill="#fff"/></svg>
<svg class="r" style="left:1636px;top:102px;" width="16" height="20" viewBox="0 0 16 20" fill="none"><path d="M4.5 9V6.2a3.5 3.5 0 0 1 7 0v.8" stroke="#fff" stroke-width="1.9" fill="none"/><rect x="2" y="9" width="12" height="10" rx="1.5" fill="#fff"/><circle cx="8" cy="14" r="1.5" fill="#224d99"/></svg>
<svg class="r" style="left:1664px;top:104px;" width="19" height="19" viewBox="0 0 19 19" fill="none"><circle cx="7.8" cy="7.8" r="6.2" stroke="#fff" stroke-width="1.6"/><path d="M12.3 12.3L17.5 17.5" stroke="#fff" stroke-width="1.9" stroke-linecap="round"/></svg>
<svg class="r" style="left:1693px;top:102px;" width="20" height="20" viewBox="0 0 20 20" fill="none"><circle cx="10" cy="10" r="8.6" stroke="#fff" stroke-width="1.5"/><path d="M7.4 7.8a2.6 2.6 0 1 1 3.8 2.3c-.8.4-1.2.9-1.2 1.7v.6" stroke="#fff" stroke-width="1.5" fill="none"/><circle cx="10" cy="14.8" r="1" fill="#fff"/></svg>
<svg class="r" style="left:1722px;top:102px;" width="21" height="21" viewBox="0 0 21 21" fill="none"><g transform="rotate(-40 10.5 10.5)"><rect x="1.5" y="7" width="10" height="7" rx="3.5" stroke="#fff" stroke-width="1.6"/><rect x="9.5" y="7" width="10" height="7" rx="3.5" stroke="#fff" stroke-width="1.6"/></g></svg>
<svg class="r" style="left:1751px;top:102px;" width="18" height="19" viewBox="0 0 18 19" fill="none"><path d="M15 10a6.2 6.2 0 1 1-2-5" stroke="#fff" stroke-width="2" fill="none"/><path d="M14.5 1.5v5h-5" stroke="#fff" stroke-width="2" fill="none"/></svg>
<svg class="r" style="left:1789px;top:104px;" width="6" height="18" viewBox="0 0 6 18" fill="none"><circle cx="3" cy="3" r="1.4" fill="#fff"/><circle cx="3" cy="9" r="1.4" fill="#fff"/><circle cx="3" cy="15" r="1.4" fill="#fff"/></svg>
<svg class="r" style="left:1815px;top:104px;" width="19" height="18" viewBox="0 0 19 18" fill="none"><path d="M3 10a6.5 6.5 0 1 0 2-5" stroke="#fff" stroke-width="1.8" fill="none"/><path d="M1.5 6.5l3.5 3.5 3-3.5" stroke="#fff" stroke-width="1.8" fill="none"/></svg>
<svg class="r" style="left:1850px;top:105px;" width="16" height="16" viewBox="0 0 16 16" fill="none"><rect x="1" y="1" width="14" height="14" rx="1.5" stroke="#fff" stroke-width="1.6"/></svg>
<svg class="r" style="left:1884px;top:106px;" width="14" height="14" viewBox="0 0 14 14" fill="none"><path d="M1.5 1.5l11 11M12.5 1.5l-11 11" stroke="#fff" stroke-width="1.8"/></svg>
<div class="r" style="left:829px;top:199px;width:1081px;height:2px;background:#e6e6e6"></div>
<svg class="r" style="left:848px;top:140.0px;" width="20" height="20" viewBox="0 0 20 20" fill="none"><path d="M8 3.5H4.5a1.5 1.5 0 0 0-1.5 1.5v10.5A1.5 1.5 0 0 0 4.5 17H15a1.5 1.5 0 0 0 1.5-1.5V12" stroke="#4d525a" stroke-width="1.7"/><path d="M11 3h6v6M17 3l-7 7" stroke="#4d525a" stroke-width="1.7"/></svg>
<svg class="r" style="left:870px;top:149.5px;" width="10" height="7" viewBox="0 0 10 7" fill="none"><path d="M1 1.3l4 4 4-4" stroke="#4d525a" stroke-width="1.7"/></svg>
<div class="t" style="left:799.0px;width:120px;text-align:center;top:166.5px;font-size:11px;line-height:13px;color:#3b3b3b;font-weight:400;">Open</div>
<div class="r" style="left:888px;top:134px;width:1px;height:60px;background:#e2e2e2"></div>
<svg class="r" style="left:905px;top:140.0px;" width="20" height="20" viewBox="0 0 20 20" fill="none"><path d="M4 14l.8-3.5L13 2.5l3 3-8 8z" stroke="#4d525a" stroke-width="1.5" stroke-linejoin="round"/><path d="M11 4.5l3 3" stroke="#4d525a" stroke-width="1.3"/><path d="M2 18h16" stroke="#4d525a" stroke-width="1.6"/></svg>
<div class="t" style="left:855.0px;width:120px;text-align:center;top:166.5px;font-size:11px;line-height:13px;color:#3b3b3b;font-weight:400;">Edit</div>
<svg class="r" style="left:941px;top:140.0px;" width="20" height="20" viewBox="0 0 20 20" fill="none"><rect x="3" y="3" width="14" height="14" rx="2" stroke="#c4c4c4" stroke-width="1.5"/><rect x="6" y="3" width="8" height="4" stroke="#c4c4c4" stroke-width="1.3"/><circle cx="10" cy="12" r="2" fill="#c4c4c4"/></svg>
<div class="t" style="left:891.0px;width:120px;text-align:center;top:166.5px;font-size:11px;line-height:13px;color:#b0b0b0;font-weight:400;">Save</div>
<svg class="r" style="left:977px;top:140.0px;" width="20" height="20" viewBox="0 0 20 20" fill="none"><path d="M8 17L2.5 11.5 11 3l6 6-8 8z" stroke="#4d525a" stroke-width="1.5" stroke-linejoin="round"/><path d="M5.5 8.5l6 6M8 17h9" stroke="#4d525a" stroke-width="1.5"/></svg>
<div class="t" style="left:927.0px;width:120px;text-align:center;top:166.5px;font-size:11px;line-height:13px;color:#3b3b3b;font-weight:400;">Clear</div>
<svg class="r" style="left:1019px;top:140.0px;" width="20" height="20" viewBox="0 0 20 20" fill="none"><path d="M3 5h14M8 5V2.5h4V5M5 5l1 13h8l1-13" stroke="#4d525a" stroke-width="1.6" stroke-linejoin="round"/></svg>
<div class="t" style="left:969.0px;width:120px;text-align:center;top:166.5px;font-size:11px;line-height:13px;color:#3b3b3b;font-weight:400;">Delete</div>
<div class="t" style="left:969.0px;width:120px;text-align:center;top:178.5px;font-size:11px;line-height:13px;color:#3b3b3b;font-weight:400;">Object</div>
<div class="r" style="left:1063px;top:134px;width:1px;height:60px;background:#e2e2e2"></div>
<svg class="r" style="left:1084px;top:140.0px;" width="20" height="20" viewBox="0 0 20 20" fill="none"><rect x="3.5" y="3.5" width="13" height="14.5" rx="1.5" stroke="#4d525a" stroke-width="1.6"/><rect x="7" y="1.5" width="6" height="3.5" rx="1" stroke="#4d525a" stroke-width="1.4" fill="#fff"/><path d="M6.5 11l2.5 2.5 4.5-4.5" stroke="#4d525a" stroke-width="1.5"/></svg>
<svg class="r" style="left:1106px;top:149.5px;" width="10" height="7" viewBox="0 0 10 7" fill="none"><path d="M1 1.3l4 4 4-4" stroke="#4d525a" stroke-width="1.7"/></svg>
<div class="t" style="left:1035.0px;width:120px;text-align:center;top:166.5px;font-size:11px;line-height:13px;color:#3b3b3b;font-weight:400;">Clipboard</div>
<div class="r" style="left:1127px;top:134px;width:1px;height:60px;background:#e2e2e2"></div>
<svg class="r" style="left:1146px;top:140.0px;" width="20" height="20" viewBox="0 0 20 20" fill="none"><path d="M6 9V6a4 4 0 0 1 8 0v3" stroke="#4d525a" stroke-width="1.6"/><rect x="3.5" y="9" width="13" height="9.5" rx="1.5" stroke="#4d525a" stroke-width="1.6"/><circle cx="10" cy="13.5" r="1.3" fill="#4d525a"/></svg>
<svg class="r" style="left:1168px;top:149.5px;" width="10" height="7" viewBox="0 0 10 7" fill="none"><path d="M1 1.3l4 4 4-4" stroke="#4d525a" stroke-width="1.7"/></svg>
<div class="t" style="left:1097.0px;width:120px;text-align:center;top:166.5px;font-size:11px;line-height:13px;color:#3b3b3b;font-weight:400;">Reserve</div>
<div class="r" style="left:1187px;top:134px;width:1px;height:60px;background:#e2e2e2"></div>
<svg class="r" style="left:1206px;top:140.0px;" width="20" height="20" viewBox="0 0 20 20" fill="none"><ellipse cx="9" cy="4.5" rx="6" ry="2.5" stroke="#4d525a" stroke-width="1.4"/><path d="M3 4.5v10c0 1.4 2.7 2.5 6 2.5M15 4.5v5" stroke="#4d525a" stroke-width="1.4"/><circle cx="15" cy="15" r="2.2" stroke="#4d525a" stroke-width="1.3"/><path d="M15 11.5v1.3M15 17.2v1.3M11.5 15h1.3M17.2 15h1.3M12.6 12.6l.9.9M16.5 16.5l.9.9M12.6 17.4l.9-.9M16.5 13.5l.9-.9" stroke="#4d525a" stroke-width="1.2"/></svg>
<svg class="r" style="left:1228px;top:149.5px;" width="10" height="7" viewBox="0 0 10 7" fill="none"><path d="M1 1.3l4 4 4-4" stroke="#4d525a" stroke-width="1.7"/></svg>
<div class="t" style="left:1158.0px;width:120px;text-align:center;top:166.5px;font-size:11px;line-height:13px;color:#3b3b3b;font-weight:400;">Manage</div>
<div class="r" style="left:1248px;top:134px;width:1px;height:60px;background:#e2e2e2"></div>
<svg class="r" style="left:1274px;top:140.0px;" width="20" height="20" viewBox="0 0 20 20" fill="none"><path d="M6.5 17V3M3 6.5l3.5-3.5 3.5 3.5M13.5 3v14M10 13.5l3.5 3.5 3.5-3.5" stroke="#4d525a" stroke-width="1.5"/></svg>
<svg class="r" style="left:1296px;top:149.5px;" width="10" height="7" viewBox="0 0 10 7" fill="none"><path d="M1 1.3l4 4 4-4" stroke="#4d525a" stroke-width="1.7"/></svg>
<div class="t" style="left:1226.0px;width:120px;text-align:center;top:166.5px;font-size:11px;line-height:13px;color:#3b3b3b;font-weight:400;">Promote &amp;</div>
<div class="t" style="left:1226.0px;width:120px;text-align:center;top:178.5px;font-size:11px;line-height:13px;color:#3b3b3b;font-weight:400;">Demote</div>
<div class="r" style="left:1323px;top:134px;width:1px;height:60px;background:#e2e2e2"></div>
<svg class="r" style="left:1350px;top:140.0px;" width="20" height="20" viewBox="0 0 20 20" fill="none"><path d="M10 16.8V10.5Q10 9.2 9 8.2L3.8 3.6M3.6 8.2V3.6H8.2M12.6 8L16.6 4M12.4 3.8H16.8V8.2" stroke="#4d525a" stroke-width="1.7"/></svg>
<svg class="r" style="left:1372px;top:149.5px;" width="10" height="7" viewBox="0 0 10 7" fill="none"><path d="M1 1.3l4 4 4-4" stroke="#4d525a" stroke-width="1.7"/></svg>
<div class="t" style="left:1302.0px;width:120px;text-align:center;top:166.5px;font-size:11px;line-height:13px;color:#3b3b3b;font-weight:400;">Revise and</div>
<div class="t" style="left:1302.0px;width:120px;text-align:center;top:178.5px;font-size:11px;line-height:13px;color:#3b3b3b;font-weight:400;">Iterate</div>
<div class="r" style="left:1402px;top:134px;width:1px;height:60px;background:#e2e2e2"></div>
<svg class="r" style="left:1420px;top:140.0px;" width="20" height="20" viewBox="0 0 20 20" fill="none"><circle cx="10" cy="10" r="7.5" stroke="#4d525a" stroke-width="1.6"/><path d="M10 6v8M6 10h8" stroke="#4d525a" stroke-width="1.6"/></svg>
<svg class="r" style="left:1442px;top:149.5px;" width="10" height="7" viewBox="0 0 10 7" fill="none"><path d="M1 1.3l4 4 4-4" stroke="#4d525a" stroke-width="1.7"/></svg>
<div class="t" style="left:1372.0px;width:120px;text-align:center;top:166.5px;font-size:11px;line-height:13px;color:#3b3b3b;font-weight:400;">Create</div>
<div class="r" style="left:1462px;top:134px;width:1px;height:60px;background:#e2e2e2"></div>
<svg class="r" style="left:1482px;top:140.0px;" width="20" height="20" viewBox="0 0 20 20" fill="none"><path d="M4 3.5h6M4 3.5v14l5-3.5 5 3.5v-6" stroke="#4d525a" stroke-width="1.5"/><path d="M14 1.5v5M11.5 4h5" stroke="#4d525a" stroke-width="1.4"/></svg>
<svg class="r" style="left:1504px;top:149.5px;" width="10" height="7" viewBox="0 0 10 7" fill="none"><path d="M1 1.3l4 4 4-4" stroke="#4d525a" stroke-width="1.7"/></svg>
<div class="t" style="left:1433.0px;width:120px;text-align:center;top:166.5px;font-size:11px;line-height:13px;color:#3b3b3b;font-weight:400;">Add To</div>
<div class="r" style="left:1523px;top:134px;width:1px;height:60px;background:#e2e2e2"></div>
<svg class="r" style="left:1544px;top:140.0px;" width="20" height="20" viewBox="0 0 20 20" fill="none"><rect x="2" y="6" width="12" height="8" rx="1" stroke="#4d525a" stroke-width="1.5"/><path d="M5 9h7M5 11.5h7M14 3.5h2.5v13H14M12 3.5h2M12 16.5h2" stroke="#4d525a" stroke-width="1.4"/></svg>
<svg class="r" style="left:1566px;top:149.5px;" width="10" height="7" viewBox="0 0 10 7" fill="none"><path d="M1 1.3l4 4 4-4" stroke="#4d525a" stroke-width="1.7"/></svg>
<div class="t" style="left:1495.0px;width:120px;text-align:center;top:166.5px;font-size:11px;line-height:13px;color:#3b3b3b;font-weight:400;">Print &amp;</div>
<div class="t" style="left:1495.0px;width:120px;text-align:center;top:178.5px;font-size:11px;line-height:13px;color:#3b3b3b;font-weight:400;">Export</div>
<div class="r" style="left:1586px;top:134px;width:1px;height:60px;background:#e2e2e2"></div>
<svg class="r" style="left:1612px;top:140.0px;" width="20" height="20" viewBox="0 0 20 20" fill="none"><circle cx="15" cy="4" r="2.5" stroke="#4d525a" stroke-width="1.4"/><circle cx="4.5" cy="10" r="2.5" stroke="#4d525a" stroke-width="1.4"/><circle cx="15" cy="16" r="2.5" stroke="#4d525a" stroke-width="1.4"/><path d="M6.8 8.8l5.9-3.5M6.8 11.2l5.9 3.5" stroke="#4d525a" stroke-width="1.4"/></svg>
<svg class="r" style="left:1634px;top:149.5px;" width="10" height="7" viewBox="0 0 10 7" fill="none"><path d="M1 1.3l4 4 4-4" stroke="#4d525a" stroke-width="1.7"/></svg>
<div class="t" style="left:1563.5px;width:120px;text-align:center;top:166.5px;font-size:11px;line-height:13px;color:#3b3b3b;font-weight:400;">Share &amp;</div>
<div class="t" style="left:1563.5px;width:120px;text-align:center;top:178.5px;font-size:11px;line-height:13px;color:#3b3b3b;font-weight:400;">Subscribe</div>
<div class="r" style="left:1661px;top:134px;width:1px;height:60px;background:#e2e2e2"></div>
<svg class="r" style="left:1783px;top:139.0px;" width="20" height="20" viewBox="0 0 20 20" fill="none"><circle cx="10" cy="10" r="7.5" stroke="#4d525a" stroke-width="1.6"/><path d="M10 6v8M6 10h8" stroke="#4d525a" stroke-width="1.6"/></svg>
<div class="t" style="left:1733.0px;width:120px;text-align:center;top:165.0px;font-size:11px;line-height:13px;color:#3b3b3b;font-weight:400;">Quick</div>
<div class="t" style="left:1733.0px;width:120px;text-align:center;top:177.0px;font-size:11px;line-height:13px;color:#3b3b3b;font-weight:400;">Create</div>
<svg class="r" style="left:1830px;top:139.0px;" width="20" height="20" viewBox="0 0 20 20" fill="none"><path d="M10 13V2.5M6.5 6l3.5-3.5L13.5 6" stroke="#4d525a" stroke-width="1.6"/><path d="M5.5 9H4v9h12V9h-1.5" stroke="#4d525a" stroke-width="1.6"/></svg>
<div class="t" style="left:1780.0px;width:120px;text-align:center;top:165.0px;font-size:11px;line-height:13px;color:#3b3b3b;font-weight:400;">Share</div>
<div class="t" style="left:1780.0px;width:120px;text-align:center;top:177.0px;font-size:11px;line-height:13px;color:#3b3b3b;font-weight:400;">Widget</div>
<svg class="r" style="left:1872px;top:139.0px;" width="20" height="20" viewBox="0 0 20 20" fill="none"><rect x="3" y="3" width="14" height="14" rx="1.5" stroke="#4d525a" stroke-width="1.8"/><path d="M7.7 3v14M12.3 3v14" stroke="#4d525a" stroke-width="1.8"/></svg>
<div class="t" style="left:1822.0px;width:120px;text-align:center;top:165.0px;font-size:11px;line-height:13px;color:#3b3b3b;font-weight:400;">Views</div>
<div class="r" style="left:829px;top:201px;width:668px;height:174px;background:#f2f2f2"></div>
<div class="r" style="left:857px;top:238px;width:108px;height:112px;">
<div class="r" style="left:4px;top:7px;width:99px;height:98px;background:#fbf200;transform:rotate(6deg);box-shadow:1px 1px 1px rgba(0,0,0,0.12)"></div>
<div class="r" style="left:0px;top:6px;width:34px;height:11px;background:rgba(170,170,165,0.7);transform:rotate(-26deg)"></div>
<div class="t" style="left:18px;top:13px;font-size:40px;line-height:40px;color:#75701a;-webkit-text-stroke:1.2px #2a2a10;font-weight:700;transform:rotate(-7deg);letter-spacing:-1.5px">Not</div>
<div class="t" style="left:27px;top:62px;font-size:40px;line-height:40px;color:#75701a;-webkit-text-stroke:1.2px #2a2a10;font-weight:700;transform:rotate(-7deg);letter-spacing:-1.5px">Yet</div>
</div>
<div class="t " style="left:988.5px;top:237.5px;font-size:14px;line-height:19px;color:#111;font-weight:700;">Name</div>
<div class="t " style="left:1132px;top:237.5px;font-size:14px;line-height:19px;color:#111;font-weight:700;">Revision</div>
<div class="t " style="left:1278px;top:237.5px;font-size:14px;line-height:19px;color:#111;font-weight:700;">State</div>
<svg class="r" style="left:988px;top:267.0px;" width="20" height="20" viewBox="0 0 20 20" fill="none"><rect x="1.1" y="1.1" width="17.8" height="17.8" rx="2.2" stroke="#3c5196" stroke-width="2"/><path d="M10 5v10M5.7 7.5l8.6 5M14.3 7.5l-8.6 5" stroke="#3c5196" stroke-width="2"/></svg>
<div class="t " style="left:1013.5px;top:267.0px;font-size:15.6px;line-height:21px;color:#4a64b0;font-weight:400;">Critical c...</div>
<div class="t " style="left:1100px;top:267.0px;font-size:15.6px;line-height:21px;color:#4a64b0;font-weight:400;">(A)</div>
<div class="t " style="left:1132px;top:267.0px;font-size:15.6px;line-height:21px;color:#222;font-weight:400;">A</div>
<div class="r" style="left:1277px;top:265px;width:84px;height:25px;background:#fd6d3a;border-radius:4px"></div>
<div class="t " style="left:1280.5px;top:267.0px;font-size:15.5px;line-height:21px;color:#2a1a10;font-weight:400;">In Approval</div>
<div class="t " style="left:988.5px;top:305.0px;font-size:14px;line-height:19px;color:#111;font-weight:700;">Type</div>
<div class="t " style="left:1132px;top:305.0px;font-size:14px;line-height:19px;color:#111;font-weight:700;">Owner</div>
<div class="t " style="left:1278px;top:305.0px;font-size:14px;line-height:19px;color:#111;font-weight:700;">Risk ID</div>
<div class="t " style="left:988.5px;top:334.0px;font-size:15.6px;line-height:21px;color:#222;font-weight:400;">Risk</div>
<div class="t " style="left:1132px;top:334.0px;font-size:15.6px;line-height:21px;color:#222;font-weight:400;">PLM tester3</div>
<div class="t " style="left:1278px;top:334.0px;font-size:15.6px;line-height:21px;color:#222;font-weight:400;">RIS-000060</div>
<svg class="r" style="left:1440px;top:227px;" width="16" height="11" viewBox="0 0 16 11" fill="none"><path d="M2 2l6 6 6-6" stroke="#444" stroke-width="1.6"/></svg>
<div class="r" style="left:1145px;top:897px;width:36px;height:17px;background:#9b9ea3;border-radius:5px 5px 0 0"></div>
<svg class="r" style="left:1155px;top:900px;" width="16" height="12" viewBox="0 0 16 12" fill="none"><path d="M2 9l6-6 6 6" stroke="#fff" stroke-width="1.6"/></svg>
<div class="t " style="left:844px;top:399.5px;font-size:13.6px;line-height:19px;color:#111;font-weight:700;">Indicators</div>
<div class="t " style="left:844px;top:439.5px;font-size:13.6px;line-height:19px;color:#111;font-weight:700;">Risk Priority</div>
<div class="t " style="left:844px;top:480.5px;font-size:13.6px;line-height:19px;color:#111;font-weight:700;">Risk Potential ...</div>
<div class="r" style="left:955px;top:476px;width:190px;height:28px;overflow:hidden"><div class="t" style="left:0;top:0;font-size:15.6px;line-height:28px;color:#222">Medium</div></div>
<div class="t " style="left:844px;top:520.5px;font-size:13.6px;line-height:19px;color:#111;font-weight:700;">Risk Assessm...</div>
<div class="r" style="left:955px;top:516px;width:190px;height:28px;overflow:hidden"><div class="t" style="left:0;top:0;font-size:15.6px;line-height:28px;color:#222">Completed Assessment</div></div>
<div class="t " style="left:844px;top:561.5px;font-size:13.6px;line-height:19px;color:#111;font-weight:700;">Risk Mitigatio...</div>
<div class="r" style="left:955px;top:557px;width:190px;height:28px;overflow:hidden"><div class="t" style="left:0;top:0;font-size:15.6px;line-height:28px;color:#222">Identify alternate suppliers and increase inventory</div></div>
<div class="t " style="left:844px;top:601.5px;font-size:13.6px;line-height:19px;color:#111;font-weight:700;">Risk Analysis</div>
<div class="r" style="left:955px;top:597px;width:190px;height:28px;overflow:hidden"><div class="t" style="left:0;top:0;font-size:15.6px;line-height:28px;color:#222">Completed with a Very high risk</div></div>
<div class="t " style="left:844px;top:642.5px;font-size:13.6px;line-height:19px;color:#111;font-weight:700;">Risk Actions</div>
<div class="r" style="left:955px;top:638px;width:190px;height:28px;overflow:hidden"><div class="t" style="left:0;top:0;font-size:15.6px;line-height:28px;color:#222">Mitigation plan recommended</div></div>
<div class="t " style="left:844px;top:682.5px;font-size:13.6px;line-height:19px;color:#111;font-weight:700;">Review Date</div>
<div class="r" style="left:955px;top:678px;width:190px;height:28px;overflow:hidden"><div class="t" style="left:0;top:0;font-size:15.6px;line-height:28px;color:#222">28/02/2026</div></div>
<div class="t " style="left:844px;top:723.5px;font-size:13.6px;line-height:19px;color:#111;font-weight:700;">Source Object</div>
<div class="r" style="left:955px;top:719px;width:190px;height:28px;overflow:hidden"><div class="t" style="left:0;top:0;font-size:15.6px;line-height:28px;color:#222">&mdash;</div></div>
<div class="t " style="left:844px;top:763.5px;font-size:13.6px;line-height:19px;color:#111;font-weight:700;">Finalized</div>
<div class="t " style="left:844px;top:804.5px;font-size:13.6px;line-height:19px;color:#111;font-weight:700;">Reserved</div>
<div class="t " style="left:844px;top:844.5px;font-size:13.6px;line-height:19px;color:#111;font-weight:700;">Creator</div>
<div class="r" style="left:955px;top:840px;width:190px;height:28px;overflow:hidden"><div class="t" style="left:0;top:0;font-size:15.6px;line-height:28px;color:#222">PLM tester3</div></div>
<div class="t " style="left:844px;top:885.5px;font-size:13.6px;line-height:19px;color:#111;font-weight:700;">Modifier</div>
<div class="r" style="left:955px;top:881px;width:190px;height:28px;overflow:hidden"><div class="t" style="left:0;top:0;font-size:15.6px;line-height:28px;color:#222">PLM tester3</div></div>
<svg class="r" style="left:955px;top:396px;" width="18" height="15" viewBox="0 0 18 15" fill="none"><path d="M2 8l4.5 4.5L16 2.5" stroke="#2a8a2a" stroke-width="1.8"/></svg>
<svg class="r" style="left:977px;top:396px;" width="16" height="15" viewBox="0 0 16 15" fill="none"><path d="M1 7.5h13M8.5 2l5.5 5.5-5.5 5.5" stroke="#f0c020" stroke-width="1.8"/></svg>
<div class="r" style="left:954px;top:439px;width:87px;height:21px;background:#f55a24;border-radius:3px"></div>
<svg class="r" style="left:958px;top:442px;" width="10" height="12" viewBox="0 0 10 12" fill="none"><path d="M1.5 6l3.5-3.5L8.5 6M1.5 10l3.5-3.5L8.5 10" stroke="#222" stroke-width="1.3"/></svg>
<div class="t " style="left:970px;top:439.0px;font-size:15.5px;line-height:21px;color:#1a1a1a;font-weight:400;">Very High</div>
<div class="r" style="left:954.5px;top:765px;width:20px;height:20px;border:1px solid #d8d8d8;border-radius:2px;box-sizing:border-box;background:#fff"></div>
<div class="r" style="left:954.5px;top:805px;width:20px;height:20px;border:1px solid #d8d8d8;border-radius:2px;box-sizing:border-box;background:#fff"></div>
<div class="t " style="left:1155.5px;top:399.5px;font-size:13.6px;line-height:19px;color:#111;font-weight:700;">Description</div>
<div class="r" style="left:1266px;top:395px;width:190px;height:28px;overflow:hidden"><div class="t" style="left:0;top:0;font-size:15.6px;line-height:28px;color:#222">Critical component supplier delay</div></div>
<div class="t " style="left:1155.5px;top:439.5px;font-size:13.6px;line-height:19px;color:#111;font-weight:700;">Risk Type</div>
<div class="t " style="left:1155.5px;top:480.5px;font-size:13.6px;line-height:19px;color:#111;font-weight:700;">Risk Likelihood</div>
<div class="t " style="left:1155.5px;top:520.5px;font-size:13.6px;line-height:19px;color:#111;font-weight:700;">Risk Trigger</div>
<div class="t " style="left:1155.5px;top:561.5px;font-size:13.6px;line-height:19px;color:#111;font-weight:700;">Risk Assessm...</div>
<div class="r" style="left:1266px;top:557px;width:190px;height:28px;overflow:hidden"><div class="t" style="left:0;top:0;font-size:15.6px;line-height:28px;color:#222">28/02/2026</div></div>
<div class="t " style="left:1155.5px;top:601.5px;font-size:13.6px;line-height:19px;color:#111;font-weight:700;">Needs Review</div>
<div class="t " style="left:1155.5px;top:642.5px;font-size:13.6px;line-height:19px;color:#111;font-weight:700;">Risk Review C...</div>
<div class="r" style="left:1266px;top:638px;width:190px;height:28px;overflow:hidden"><div class="t" style="left:0;top:0;font-size:15.6px;line-height:28px;color:#222">Mitigate</div></div>
<div class="t " style="left:1155.5px;top:682.5px;font-size:13.6px;line-height:19px;color:#111;font-weight:700;">Comments</div>
<div class="r" style="left:1266px;top:678px;width:190px;height:28px;overflow:hidden"><div class="t" style="left:0;top:0;font-size:15.6px;line-height:28px;color:#222">[plm.tester3 | 2025-09-24 10:00]</div></div>
<div class="t " style="left:1155.5px;top:723.5px;font-size:13.6px;line-height:19px;color:#111;font-weight:700;">Derived Objec...</div>
<div class="r" style="left:1266px;top:719px;width:190px;height:28px;overflow:hidden"><div class="t" style="left:0;top:0;font-size:15.6px;line-height:28px;color:#222">&mdash;</div></div>
<div class="t " style="left:1155.5px;top:763.5px;font-size:13.6px;line-height:19px;color:#111;font-weight:700;">Finalized At</div>
<div class="r" style="left:1266px;top:759px;width:190px;height:28px;overflow:hidden"><div class="t" style="left:0;top:0;font-size:15.6px;line-height:28px;color:#222">&mdash;</div></div>
<div class="t " style="left:1155.5px;top:804.5px;font-size:13.6px;line-height:19px;color:#111;font-weight:700;">Reserved By</div>
<div class="r" style="left:1266px;top:800px;width:190px;height:28px;overflow:hidden"><div class="t" style="left:0;top:0;font-size:15.6px;line-height:28px;color:#222">&mdash;</div></div>
<div class="t " style="left:1155.5px;top:844.5px;font-size:13.6px;line-height:19px;color:#111;font-weight:700;">Created At</div>
<div class="r" style="left:1266px;top:840px;width:190px;height:28px;overflow:hidden"><div class="t" style="left:0;top:0;font-size:15.6px;line-height:28px;color:#222">24/09/2025 09:45 PM</div></div>
<div class="t " style="left:1155.5px;top:885.5px;font-size:13.6px;line-height:19px;color:#111;font-weight:700;">Updated At</div>
<div class="r" style="left:1266px;top:881px;width:190px;height:28px;overflow:hidden"><div class="t" style="left:0;top:0;font-size:15.6px;line-height:28px;color:#222">24/09/2025 11:32 PM</div></div>
<div class="r" style="left:1266px;top:439.5px;width:131.5px;height:20px;background:#cdd3f4;border-radius:3px"></div>
<svg class="r" style="left:1268px;top:441px;" width="15" height="15" viewBox="0 0 15 15" fill="none"><path d="M2 13h12M3 13v-3h2.5v3M6.5 13V7.5H9V13M10 13V3.5h2.5V13" stroke="#333" stroke-width="1.1"/></svg>
<div class="t " style="left:1283px;top:439.0px;font-size:15.5px;line-height:21px;color:#1a1a1a;font-weight:400;">Operational Risk</div>
<div class="r" style="left:1266px;top:480px;width:50.5px;height:20px;background:#fde6ae;border-radius:3px"></div>
<svg class="r" style="left:1267px;top:482px;" width="15" height="15" viewBox="0 0 15 15" fill="none"><path d="M2 9.5l5.5-5.5 5.5 5.5" stroke="#333" stroke-width="1.2"/></svg>
<div class="t " style="left:1283px;top:479.5px;font-size:15.5px;line-height:21px;color:#1a1a1a;font-weight:400;">High</div>
<div class="r" style="left:1266px;top:520px;width:176.5px;height:20px;background:#fde1bf;border-radius:3px"></div>
<svg class="r" style="left:1268px;top:522px;" width="15" height="15" viewBox="0 0 15 15" fill="none"><path d="M1.5 13V6l3 2V6l3 2V6l3 2V3h2.5v10z" stroke="#333" stroke-width="1.1" fill="none"/><path d="M3.5 10.5h1.5M6.5 10.5h1.5M9.5 10.5h1.5" stroke="#333" stroke-width="1"/></svg>
<div class="t " style="left:1283px;top:520.0px;font-size:15.5px;line-height:21px;color:#1a1a1a;font-weight:400;">Manufacturing Defects</div>
<div class="r" style="left:1266.5px;top:602.5px;width:19.5px;height:20px;border:1px solid #d8d8d8;border-radius:2px;box-sizing:border-box;background:#fff"></div>
<svg class="r" style="left:1266.5px;top:602.5px;" width="20" height="20" viewBox="0 0 20 20" fill="none"><path d="M4 10.5l4 4 8-8.5" stroke="#2f6fb8" stroke-width="1.8"/></svg>
<div class="r" style="left:1492px;top:375px;width:5px;height:491px;background:#e4e4e4"></div>
<div class="r" style="left:1479px;top:522px;width:18px;height:36px;background:#878c94;border-radius:5px 0 0 5px"></div>
<svg class="r" style="left:1481px;top:532px;" width="12" height="16" viewBox="0 0 12 16" fill="none"><path d="M4 3l5 5-5 5" stroke="#fff" stroke-width="1.5"/></svg>
<div class="r" style="left:1497px;top:201px;width:1px;height:714px;background:#e2e2e2"></div>
<div class="r" style="left:1498px;top:258px;width:411px;height:1px;background:#e6e6e6"></div>
<svg class="r" style="left:1517px;top:212px;" width="20" height="20" viewBox="0 0 20 20" fill="none"><path d="M8 3.5H4.5a1.5 1.5 0 0 0-1.5 1.5v10.5A1.5 1.5 0 0 0 4.5 17H15a1.5 1.5 0 0 0 1.5-1.5V12" stroke="#4d525a" stroke-width="1.7"/><path d="M11 3h6v6M17 3l-7 7" stroke="#4d525a" stroke-width="1.7"/></svg>
<svg class="r" style="left:1539px;top:223px;" width="10" height="7" viewBox="0 0 10 7" fill="none"><path d="M1 1.3l4 4 4-4" stroke="#4d525a" stroke-width="1.7"/></svg>
<div class="t" style="left:1488.5px;width:80px;text-align:center;top:239.0px;font-size:11px;line-height:13px;color:#333;font-weight:400;">Open</div>
<div class="r" style="left:1558px;top:206px;width:1px;height:48px;background:#e2e2e2"></div>
<svg class="r" style="left:1575px;top:212px;" width="20" height="20" viewBox="0 0 20 20" fill="none"><path d="M4 14l.8-3.5L13 2.5l3 3-8 8z" stroke="#4d525a" stroke-width="1.5" stroke-linejoin="round"/><path d="M11 4.5l3 3" stroke="#4d525a" stroke-width="1.3"/><path d="M2 18h16" stroke="#4d525a" stroke-width="1.6"/></svg>
<div class="t" style="left:1545.0px;width:80px;text-align:center;top:239.0px;font-size:11px;line-height:13px;color:#333;font-weight:400;">Edit</div>
<svg class="r" style="left:1610px;top:212px;" width="20" height="20" viewBox="0 0 20 20" fill="none"><rect x="3" y="3" width="14" height="14" rx="2" stroke="#c4c4c4" stroke-width="1.5"/><rect x="6" y="3" width="8" height="4" stroke="#c4c4c4" stroke-width="1.3"/><circle cx="10" cy="12" r="2" fill="#c4c4c4"/></svg>
<div class="t" style="left:1580.5px;width:80px;text-align:center;top:239.0px;font-size:11px;line-height:13px;color:#b0b0b0;font-weight:400;">Save</div>
<svg class="r" style="left:1650px;top:212px;" width="20" height="20" viewBox="0 0 20 20" fill="none"><path d="M10 14V3M6 7l4-4 4 4M3 11h4M13 11h4M2 17h16" stroke="#4d525a" stroke-width="1.7"/></svg>
<div class="t" style="left:1620.0px;width:80px;text-align:center;top:239.0px;font-size:11px;line-height:13px;color:#333;font-weight:400;">Promote</div>
<svg class="r" style="left:1692px;top:212px;" width="20" height="20" viewBox="0 0 20 20" fill="none"><path d="M10 6v11M6 13l4 4 4-4M3 3h14M3 7.5h4.5M12.5 7.5H17" stroke="#4d525a" stroke-width="1.7"/></svg>
<div class="t" style="left:1661.5px;width:80px;text-align:center;top:239.0px;font-size:11px;line-height:13px;color:#333;font-weight:400;">Demote</div>
<svg class="r" style="left:1730px;top:212px;" width="20" height="20" viewBox="0 0 20 20" fill="none"><path d="M3.5 18V3c4-2 6.5 2 13 0v9c-6.5 2-9-2-13 0" stroke="#4d525a" stroke-width="1.3"/><path d="M7 2.5v10M10.5 3.5v10M13.5 3v10M3.5 7.5c4-2 6.5 2 13 0" stroke="#4d525a" stroke-width="1"/></svg>
<div class="t" style="left:1700.5px;width:80px;text-align:center;top:239.0px;font-size:11px;line-height:13px;color:#333;font-weight:400;">Finalize</div>
<svg class="r" style="left:1768px;top:212px;" width="20" height="20" viewBox="0 0 20 20" fill="none"><path d="M10 16.8V10.5Q10 9.2 9 8.2L3.8 3.6M3.6 8.2V3.6H8.2M12.6 8L16.6 4M12.4 3.8H16.8V8.2" stroke="#4d525a" stroke-width="1.7"/></svg>
<div class="t" style="left:1737.5px;width:80px;text-align:center;top:239.0px;font-size:11px;line-height:13px;color:#333;font-weight:400;">Revise</div>
<svg class="r" style="left:1805px;top:212px;" width="20" height="20" viewBox="0 0 20 20" fill="none"><path d="M16 10.5a6 6 0 1 1-2-5" stroke="#4d525a" stroke-width="1.8"/><path d="M15 2v4.5h-4.5" stroke="#4d525a" stroke-width="1.8"/></svg>
<div class="t" style="left:1775.0px;width:80px;text-align:center;top:239.0px;font-size:11px;line-height:13px;color:#333;font-weight:400;">Refresh</div>
<svg class="r" style="left:1872px;top:211px;" width="20" height="20" viewBox="0 0 20 20" fill="none"><rect x="3" y="3" width="14" height="14" rx="1.5" stroke="#333" stroke-width="1.8"/><path d="M7.7 3v14M12.3 3v14" stroke="#333" stroke-width="1.8"/></svg>
<div class="t" style="left:1842.0px;width:80px;text-align:center;top:237.0px;font-size:11px;line-height:13px;color:#333;font-weight:400;">Views</div>
<div class="r" style="left:1507px;top:269px;width:29px;height:29px;">
<div class="r" style="left:1px;top:1px;width:26px;height:26px;background:#f8f000;transform:rotate(3deg)"></div>
<div class="t" style="left:5px;top:3px;font-size:10px;line-height:11px;color:#333;font-weight:700;transform:rotate(4deg)">Not<br>&nbsp;Yet</div></div>
<svg class="r" style="left:1546.5px;top:274.0px;" width="19" height="19" viewBox="0 0 20 20" fill="none"><rect x="1.1" y="1.1" width="17.8" height="17.8" rx="2.2" stroke="#3c5196" stroke-width="2"/><path d="M10 5v10M5.7 7.5l8.6 5M14.3 7.5l-8.6 5" stroke="#3c5196" stroke-width="2"/></svg>
<div class="t " style="left:1571.5px;top:272.0px;font-size:16.8px;line-height:23px;color:#4a64b0;font-weight:400;">Critical component sup...</div>
<div class="t " style="left:1767.5px;top:272.0px;font-size:16.8px;line-height:23px;color:#4a64b0;font-weight:400;">(A)</div>
<svg class="r" style="left:1880px;top:275px;" width="16" height="11" viewBox="0 0 16 11" fill="none"><path d="M2 9l6-6 6 6" stroke="#111" stroke-width="1.8"/></svg>
<div class="r" style="left:1498px;top:305px;width:411px;height:49px;background:#f0f2f5"></div>
<div class="r" style="left:1498px;top:353px;width:411px;height:1px;background:#dde1e6"></div>
<svg class="r" style="left:1509px;top:320px;" width="12" height="14" viewBox="0 0 12 14" fill="none"><path d="M9 1.5L3.5 7 9 12.5" stroke="#333" stroke-width="1.7"/></svg>
<div class="t " style="left:1532px;top:320.0px;font-size:13.5px;line-height:18px;color:#555;font-weight:700;">formation</div>
<svg class="r" style="left:1609px;top:322px;" width="18" height="14" viewBox="0 0 18 14" fill="none"><path d="M7 3.5H5a3.5 3.5 0 0 0 0 7h2M11 3.5h2a3.5 3.5 0 0 1 0 7h-2M6 7h6" stroke="#555" stroke-width="1.6"/></svg>
<div class="t " style="left:1637.5px;top:320.0px;font-size:13.5px;line-height:18px;color:#555;font-weight:700;">Relations</div>
<div class="r" style="left:1706px;top:316px;width:103px;height:26px;background:#fff;border-radius:4px"></div>
<div class="r" style="left:1706px;top:350px;width:103px;height:3px;background:#1c2f5e"></div>
<svg class="r" style="left:1714px;top:321px;" width="17" height="17" viewBox="0 0 17 17" fill="none"><path d="M3 7a6 6 0 0 1 10-3.2M14.3 10a6 6 0 0 1-10 3.2" stroke="#2a3f70" stroke-width="1.9"/><path d="M12.5 1v3.5H9M4.5 16v-3.5H8" stroke="#2a3f70" stroke-width="1.8"/></svg>
<div class="t " style="left:1741.5px;top:319.5px;font-size:13.6px;line-height:19px;color:#1e3466;font-weight:700;">Lifecycle</div>
<svg class="r" style="left:1823px;top:321px;" width="16" height="16" viewBox="0 0 16 16" fill="none"><path d="M3 8a5.5 5.5 0 1 0 1.6-3.9" stroke="#555" stroke-width="1.4"/><path d="M2.5 2v3.5H6M8 5v3.5l2.5 1.5" stroke="#555" stroke-width="1.4"/></svg>
<div class="r" style="left:1849px;top:315px;width:27px;height:28px;overflow:hidden"><div class="t" style="left:0;top:0;font-size:14px;line-height:28px;color:#555;font-weight:700">History</div></div>
<svg class="r" style="left:1886px;top:320px;" width="12" height="14" viewBox="0 0 12 14" fill="none"><path d="M3.5 1.5L9 7l-5.5 5.5" stroke="#333" stroke-width="1.7"/></svg>
<div class="r" style="left:1516px;top:531px;width:371px;height:78px;background:#e8e8e8;border-radius:6px"></div>
<div class="r" style="left:1701.5px;top:397px;width:1.2px;height:472px;background:#b4bac2"></div>
<svg class="r" style="left:1690px;top:385px;" width="24" height="24" viewBox="0 0 24 24" fill="none"><circle cx="12" cy="12" r="11.2" fill="#fff" stroke="#2e6db4" stroke-width="1.2"/><circle cx="12" cy="12" r="7.5" fill="#3a7dc2"/></svg>
<div class="t " style="left:1732.5px;top:386.0px;font-size:16px;line-height:22px;color:#111;font-weight:700;">Draft</div>
<svg class="r" style="left:1690px;top:464px;" width="24" height="24" viewBox="0 0 24 24" fill="none"><circle cx="12" cy="12" r="11.2" fill="#fff" stroke="#2e6db4" stroke-width="1.2"/><circle cx="12" cy="12" r="7.5" fill="#3a7dc2"/></svg>
<div class="t " style="left:1732.5px;top:465.0px;font-size:16px;line-height:22px;color:#111;font-weight:700;">In Work</div>
<svg class="r" style="left:1690px;top:542px;" width="24" height="24" viewBox="0 0 24 24" fill="none"><circle cx="12" cy="12" r="11.2" fill="#fff" stroke="#2e6db4" stroke-width="1.2"/><circle cx="12" cy="12" r="7.5" fill="#3a7dc2"/></svg>
<div class="t " style="left:1732.5px;top:543.0px;font-size:16px;line-height:22px;color:#111;font-weight:700;">In Approval</div>
<svg class="r" style="left:1690px;top:621px;" width="24" height="24" viewBox="0 0 24 24" fill="none"><circle cx="12" cy="12" r="11.2" fill="#fff" stroke="#6a6a6a" stroke-width="1.1"/><circle cx="12" cy="12" r="7" fill="#7f7f7f"/></svg>
<div class="t " style="left:1732.5px;top:622.0px;font-size:16px;line-height:22px;color:#6b7785;font-weight:700;">In Review</div>
<svg class="r" style="left:1690px;top:700px;" width="24" height="24" viewBox="0 0 24 24" fill="none"><circle cx="12" cy="12" r="11.2" fill="#fff" stroke="#6a6a6a" stroke-width="1.1"/><circle cx="12" cy="12" r="7" fill="#7f7f7f"/></svg>
<div class="t " style="left:1732.5px;top:701.0px;font-size:16px;line-height:22px;color:#6b7785;font-weight:700;">Completed</div>
<svg class="r" style="left:1690px;top:779px;" width="24" height="24" viewBox="0 0 24 24" fill="none"><circle cx="12" cy="12" r="11.2" fill="#fff" stroke="#6a6a6a" stroke-width="1.1"/><circle cx="12" cy="12" r="7" fill="#7f7f7f"/></svg>
<div class="t " style="left:1732.5px;top:780.0px;font-size:16px;line-height:22px;color:#6b7785;font-weight:700;">On Hold</div>
<svg class="r" style="left:1690px;top:857.5px;" width="24" height="24" viewBox="0 0 24 24" fill="none"><circle cx="12" cy="12" r="11.2" fill="#fff" stroke="#6a6a6a" stroke-width="1.1"/><circle cx="12" cy="12" r="7" fill="#7f7f7f"/></svg>
<div class="t " style="left:1732.5px;top:858.5px;font-size:16px;line-height:22px;color:#6b7785;font-weight:700;">Stopped</div>
<div class="r" style="left:1732px;top:417px;width:75px;height:23px;background:#3a7dc2;border-radius:12px"></div>
<div class="t" style="left:1732.0px;width:75px;text-align:center;top:421.0px;font-size:11px;line-height:15px;color:#fff;font-weight:700;">24/09/2025</div>
<div class="r" style="left:1732px;top:496px;width:75px;height:23px;background:#3a7dc2;border-radius:12px"></div>
<div class="t" style="left:1732.0px;width:75px;text-align:center;top:500.0px;font-size:11px;line-height:15px;color:#fff;font-weight:700;">24/09/2025</div>
<div class="r" style="left:1732px;top:574px;width:75px;height:23px;background:#3a7dc2;border-radius:12px"></div>
<div class="t" style="left:1732.0px;width:75px;text-align:center;top:578.0px;font-size:11px;line-height:15px;color:#fff;font-weight:700;">24/09/2025</div>
<div class="t " style="left:1655px;top:414.0px;font-size:11px;line-height:15px;color:#222;font-weight:700;">0 day</div>
<div class="t " style="left:1655px;top:493.0px;font-size:11px;line-height:15px;color:#222;font-weight:700;">0 day</div>
<div class="r" style="left:1905px;top:354px;width:4px;height:512px;background:#e6e6e6"></div>
<div class="r" style="left:1913px;top:95px;width:5px;height:812px;background:#a3a3a3;border-radius:2px 2px 0 0"></div>
<div class="r" style="left:0px;top:915px;width:1918px;height:2px;background:#bfc4ca"></div>
</body></html>
